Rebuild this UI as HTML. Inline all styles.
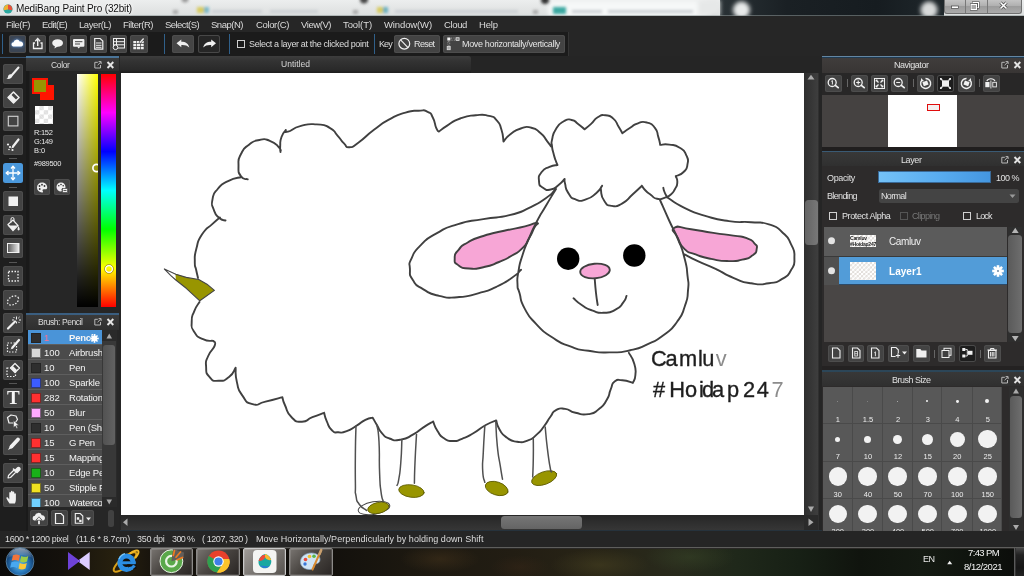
<!DOCTYPE html><html><head><meta charset="utf-8"><title>MediBang Paint Pro (32bit)</title><style>
*{box-sizing:border-box;margin:0;padding:0}
html,body{width:1024px;height:576px;overflow:hidden;background:#222}
body{position:relative;font-family:"Liberation Sans",sans-serif;font-size:9px;color:#d8d8d8}
.a{position:absolute}
.t{position:absolute;white-space:nowrap;line-height:1.15;will-change:transform}
.btn{position:absolute;background:#434343;border-radius:2.5px;box-shadow:inset 0 0 0 1px #4d4d4d}
.hdr{position:absolute;background:linear-gradient(#3b3b3b,#2f2f2f)}
svg{position:absolute;overflow:visible}
</style></head><body>
<div class="a" style="left:0px;top:0px;width:1024px;height:16px;background:linear-gradient(#eceeee,#e4e6e6 50%,#dcdfdf)"></div>
<div class="a" style="left:720px;top:0px;width:224px;height:16px;background:linear-gradient(90deg,#2a3236,#1a2024 30%,#161c20 70%,#20282c)"></div>
<svg style="left:0;top:0" width="1024" height="16" viewBox="0 0 1024 16"><defs><filter id="bl" x="-50%" y="-50%" width="200%" height="200%"><feGaussianBlur stdDeviation="1.500"/></filter><filter id="bl2" x="-50%" y="-50%" width="200%" height="200%"><feGaussianBlur stdDeviation="2.200"/></filter></defs><g filter="url(#bl2)"><rect x="548" y="1" width="160" height="16" rx="5" fill="#f6f8f8"/></g><g filter="url(#bl)"><rect x="197" y="7" width="8" height="6" fill="#d8cc60"/><rect x="204" y="7" width="5" height="6" fill="#7ab8c8"/><rect x="377" y="7" width="7" height="6" fill="#d8cc60"/><rect x="383" y="7" width="5" height="6" fill="#6ab0c0"/><rect x="553" y="7" width="13" height="7" fill="#3aa8a0"/><rect x="212" y="10" width="50" height="3" fill="#ccd0d4"/><rect x="270" y="10" width="48" height="3" fill="#ccd0d4"/><rect x="395" y="10" width="60" height="3" fill="#ccd0d4"/><rect x="448" y="10" width="70" height="3" fill="#ccd0d4"/><rect x="572" y="10" width="30" height="3" fill="#ccd0d4"/><rect x="608" y="10" width="85" height="3" fill="#ccd0d4"/><circle cx="185" cy="-1" r="3.500" fill="#999"/><circle cx="364" cy="-.5" r="4" fill="#444"/><circle cx="545" cy="0" r="4" fill="#333"/><rect x="173" y="10" width="5" height="4" fill="#a8a8a8"/><rect x="353" y="10" width="5" height="4" fill="#a8a8a8"/><rect x="533" y="10" width="5" height="4" fill="#a8a8a8"/><rect x="712" y="10" width="5" height="4" fill="#a8a8a8"/></g><g filter="url(#bl2)"><circle cx="741.500" cy="10" r="8.500" fill="#e8eaea"/><circle cx="929" cy="10" r="8.500" fill="#d8dada"/><rect x="698" y="0" width="22" height="16" fill="#e6e8e8"/></g></svg>
<div class="a" style="left:944px;top:0px;width:77.5px;height:13.5px;background:linear-gradient(#c4c4c4,#b0b0b0 45%,#9c9c9c 50%,#aaa);border:1px solid #707070;border-top:none;border-radius:0 0 3px 3px"></div>
<div class="a" style="left:965px;top:0px;width:1px;height:13px;background:#787878"></div>
<div class="a" style="left:987px;top:0px;width:1px;height:13px;background:#787878"></div>
<svg style="left:944px;top:0" width="78" height="14"><rect x="7.500" y="6" width="7" height="2.600" fill="#fff" stroke="#444" stroke-width=".7"/><rect x="29" y="2.500" width="5.500" height="5" fill="none" stroke="#444" stroke-width="2"/><rect x="29" y="2.500" width="5.500" height="5" fill="none" stroke="#fff" stroke-width="1"/><rect x="27" y="4.500" width="5.500" height="5" fill="#aaa" stroke="#444" stroke-width="2"/><rect x="27" y="4.500" width="5.500" height="5" fill="#aaa" stroke="#fff" stroke-width="1"/><path d="M56.500 2.500 62.500 8.500M62.500 2.500 56.500 8.500" stroke="#444" stroke-width="3"/><path d="M56.500 2.500 62.500 8.500M62.500 2.500 56.500 8.500" stroke="#fff" stroke-width="1.600"/></svg>
<div class="a" style="left:0px;top:14.5px;width:1024px;height:1px;background:rgba(140,150,150,.55)"></div>
<div class="t" style="left:16.00px;top:2.55px;font-size:10px;color:#111;letter-spacing:-0.157px;text-shadow:0 0 3px #fff,0 0 5px #fff;">MediBang Paint Pro (32bit)</div>
<svg style="left:2.500px;top:3.500px" width="10" height="10" viewBox="0 0 11 11"><circle cx="5.5" cy="5.5" r="5" fill="#2aa8a0"/><path d="M5.5 .5 A5 5 0 0 1 10 7 L5.5 6Z" fill="#e8503a"/><path d="M5.5 .5A5 5 0 0 0 1 7L5.5 6Z" fill="#f0b030"/></svg>
<div class="a" style="left:0px;top:16px;width:1024px;height:40px;background:#262626"></div>
<div class="t" style="left:6.00px;top:19.54px;font-size:9.5px;color:#dcdcdc;letter-spacing:-0.491px;">File(F)</div>
<div class="t" style="left:42.00px;top:19.54px;font-size:9.5px;color:#dcdcdc;letter-spacing:-0.576px;">Edit(E)</div>
<div class="t" style="left:79.00px;top:19.54px;font-size:9.5px;color:#dcdcdc;letter-spacing:-0.422px;">Layer(L)</div>
<div class="t" style="left:123.00px;top:19.54px;font-size:9.5px;color:#dcdcdc;letter-spacing:-0.478px;">Filter(R)</div>
<div class="t" style="left:165.00px;top:19.54px;font-size:9.5px;color:#dcdcdc;letter-spacing:-0.563px;">Select(S)</div>
<div class="t" style="left:211.00px;top:19.54px;font-size:9.5px;color:#dcdcdc;letter-spacing:-0.482px;">Snap(N)</div>
<div class="t" style="left:256.00px;top:19.54px;font-size:9.5px;color:#dcdcdc;letter-spacing:-0.362px;">Color(C)</div>
<div class="t" style="left:301.00px;top:19.54px;font-size:9.5px;color:#dcdcdc;letter-spacing:-0.441px;">View(V)</div>
<div class="t" style="left:343.00px;top:19.54px;font-size:9.5px;color:#dcdcdc;letter-spacing:-0.080px;">Tool(T)</div>
<div class="t" style="left:384.00px;top:19.54px;font-size:9.5px;color:#dcdcdc;letter-spacing:-0.120px;">Window(W)</div>
<div class="t" style="left:444.00px;top:19.54px;font-size:9.5px;color:#dcdcdc;letter-spacing:-0.364px;">Cloud</div>
<div class="t" style="left:479.00px;top:19.54px;font-size:9.5px;color:#dcdcdc;letter-spacing:-0.135px;">Help</div>
<div class="a" style="left:0px;top:32px;width:569px;height:24px;background:#1b1b1b;border-right:1px solid #343434"></div>
<div class="a" style="left:2px;top:34px;width:1px;height:20px;background:#30608a"></div>
<div class="a" style="left:164px;top:34px;width:1px;height:20px;background:#30608a"></div>
<div class="a" style="left:229px;top:34px;width:1px;height:20px;background:#30608a"></div>
<div class="a" style="left:374px;top:34px;width:1px;height:20px;background:#30608a"></div>
<div class="btn" style="left:9px;top:35px;width:17.25px;height:17.5px;background:#3b4554;"><svg width="17.25" height="17.5" viewBox="0 0 17.25 17.5" style="left:0;top:0"><path d="M4 11.5a2.2 2.2 0 0 1 .6-4.3 3.2 3.2 0 0 1 6.1-.6 2.5 2.5 0 0 1 1.6 4.9z" fill="#fff" style="filter:drop-shadow(0 0 1.5px #6af)"/></svg></div>
<div class="btn" style="left:29px;top:35px;width:17.25px;height:17.5px;"><svg width="17.25" height="17.5" viewBox="0 0 17.25 17.5" style="left:0;top:0"><path d="M6 8H4.5v5.5h8.5V8H11.500" fill="none" stroke="#f0f0f0" stroke-width="1.3"/><path d="M8.7 11V4.500" stroke="#f0f0f0" stroke-width="1.4"/><path d="M6.300 6.200 8.700 3.500 11.100 6.200" fill="none" stroke="#f0f0f0" stroke-width="1.3"/></svg></div>
<div class="btn" style="left:49.4px;top:35px;width:17.25px;height:17.5px;"><svg width="17.25" height="17.5" viewBox="0 0 17.25 17.5" style="left:0;top:0"><ellipse cx="8.600" cy="8" rx="5.400" ry="3.800" fill="#f0f0f0"/><path d="M6 10.500 5.500 13.500 9 11.300z" fill="#f0f0f0"/></svg></div>
<div class="btn" style="left:69.75px;top:35px;width:17.25px;height:17.5px;"><svg width="17.25" height="17.5" viewBox="0 0 17.25 17.5" style="left:0;top:0"><rect x="3" y="4" width="11.400" height="7.800" rx="1" fill="#f0f0f0"/><path d="M7 11.500 8.700 13.600 10.400 11.500z" fill="#f0f0f0"/><path d="M5 6.700h7.400M5 9h5" stroke="#444" stroke-width="1"/></svg></div>
<div class="btn" style="left:90px;top:35px;width:17.25px;height:17.5px;"><svg width="17.25" height="17.5" viewBox="0 0 17.25 17.5" style="left:0;top:0"><path d="M4.700 3.500h5.500l2.600 2.600v8H4.700z" fill="none" stroke="#f0f0f0" stroke-width="1.200"/><path d="M6 8h5.500M6 10.300h5.500M6 12.300h5.500" stroke="#f0f0f0" stroke-width="1"/></svg></div>
<div class="btn" style="left:110px;top:35px;width:17.25px;height:17.5px;"><svg width="17.25" height="17.5" viewBox="0 0 17.25 17.5" style="left:0;top:0"><rect x="3.500" y="3.500" width="11" height="9.500" fill="none" stroke="#f0f0f0" stroke-width="1"/><path d="M3.500 6.700h11M3.500 9.800h11M6.500 3.500v9.500" stroke="#f0f0f0" stroke-width="1"/><circle cx="5.500" cy="12.300" r="2.300" fill="#3f3f3f" stroke="#f0f0f0" stroke-width="1"/></svg></div>
<div class="btn" style="left:130.25px;top:35px;width:17.25px;height:17.5px;"><svg width="17.25" height="17.5" viewBox="0 0 17.25 17.5" style="left:0;top:0"><path d="M3.300 6h3v2.300h-3zM7 6h3v2.300H7zM10.700 6h3v2.300h-3zM3.300 9h3v2.300h-3zM7 9h3v2.300H7zM10.700 9h3v2.300h-3zM3.300 12h3v2.300h-3zM7 12h3v2.300H7zM10.700 12h3v2.300h-3z" fill="#f0f0f0"/><path d="M9.500 8 13.800 3.200" stroke="#3f3f3f" stroke-width="2.600"/><path d="M9.800 7.700 13.600 3.500" stroke="#f0f0f0" stroke-width="1.300"/></svg></div>
<div class="btn" style="left:171.5px;top:35px;width:22.25px;height:17.5px;background:#454545;"><svg width="22.25" height="17.5" viewBox="0 0 22.25 17.5" style="left:0;top:0"><path d="M4.500 8.200 9.300 4.500v2.300c4.500 0 7.200 2 8 5.700-2-2-4.500-2.700-8-2.500v2.200z" fill="#f0f0f0"/></svg></div>
<div class="btn" style="left:197.5px;top:35px;width:22.5px;height:17.5px;background:#262626;box-shadow:inset 0 0 0 1px #484848;"><svg width="22.5" height="17.5" viewBox="0 0 22.5 17.5" style="left:0;top:0"><path d="M18 8.200 13.200 4.500v2.300c-4.500 0-7.200 2-8 5.700 2-2 4.500-2.700 8-2.500v2.200z" fill="#f0f0f0"/></svg></div>
<div class="a" style="left:237px;top:40px;width:8px;height:8px;border:1px solid #d0d0d0"></div>
<div class="t" style="left:249.00px;top:38.83px;font-size:9px;color:#ddd;letter-spacing:-0.345px;">Select a layer at the clicked point</div>
<div class="t" style="left:379.00px;top:38.83px;font-size:9px;color:#ddd;letter-spacing:-0.903px;">Key</div>
<div class="btn" style="left:394.4px;top:35px;width:45.6px;height:17.5px"><svg width="46" height="17.500" style="left:0;top:0"><circle cx="10.300" cy="8.700" r="5.400" fill="none" stroke="#f0f0f0" stroke-width="1.200"/><path d="M6.600 4.800 14 12.600" stroke="#f0f0f0" stroke-width="1.200"/></svg></div>
<div class="t" style="left:413.70px;top:38.83px;font-size:9px;color:#e4e4e4;letter-spacing:-0.602px;">Reset</div>
<div class="btn" style="left:443.4px;top:35px;width:121.6px;height:17.5px"><svg width="20" height="17.500" style="left:0;top:0"><rect x="4.300" y="2.500" width="3" height="3" fill="#f4f4f4"/><rect x="8" y="3" width="4.300" height="2.200" fill="none" stroke="#aaa" stroke-width=".7" stroke-dasharray="1 .7"/><rect x="13.100" y="2.700" width="3" height="2.800" fill="#888" stroke="#ddd" stroke-width=".8"/><rect x="4.900" y="6.500" width="1.800" height="4" fill="none" stroke="#aaa" stroke-width=".7" stroke-dasharray="1 .7"/><rect x="4.200" y="11.500" width="3" height="3.200" fill="#aaa" stroke="#ddd" stroke-width=".8"/></svg></div>
<div class="t" style="left:462.00px;top:38.83px;font-size:9px;color:#e4e4e4;letter-spacing:-0.341px;">Move horizontally/vertically</div>
<div class="a" style="left:0px;top:56px;width:1024px;height:475px;background:#252525"></div>
<div class="a" style="left:119.5px;top:56px;width:351px;height:17px;background:linear-gradient(#3d3d3d,#333 30%,#2a2a2a 80%,#1c1c1c);border-radius:0 3px 0 0"></div>
<div class="t" style="left:281.00px;top:59.91px;font-size:8.5px;color:#d8d8d8;letter-spacing:0.023px;">Untitled</div>
<div class="a" style="left:121px;top:73px;width:683px;height:442px;background:#fff"></div>
<div class="a" style="left:804px;top:73px;width:14px;height:442px;background:linear-gradient(90deg,#2e2e2e,#3e3e3e)"></div>
<div class="a" style="left:818px;top:73px;width:1px;height:457px;background:#303030"></div>
<svg style="left:804px;top:73px" width="14" height="442"><path d="M3.500 6.500 7 1.800 10.500 6.500z" fill="#aaa"/><path d="M4 433.500 7 439 10 433.500z" fill="#aaa"/></svg>
<div class="a" style="left:805px;top:200px;width:13px;height:45px;background:linear-gradient(90deg,#646464,#787878);border-radius:3.500px"></div>
<div class="a" style="left:121px;top:515px;width:683px;height:14.5px;background:linear-gradient(#262626,#363636)"></div>
<div class="a" style="left:804px;top:515px;width:14px;height:14.5px;background:#2a2a2a"></div>
<svg style="left:121px;top:515px" width="700" height="15"><path d="M6.500 3.500 2 7.250 6.500 11z" fill="#aaa"/><path d="M687.500 3.500 692.500 7.250 687.500 11z" fill="#aaa"/></svg>
<div class="a" style="left:500.5px;top:516px;width:81.5px;height:13px;background:linear-gradient(#767676,#646464);border-radius:3.500px"></div>
<div class="a" style="left:119.5px;top:529.5px;width:702px;height:1.5px;background:#26323c"></div>
<svg style="left:121px;top:73px" width="683" height="442" viewBox="121 73 683 442"><g fill="none" stroke="#404040" stroke-width="1.900" stroke-linecap="round" stroke-linejoin="round"><path d="M536.7 223.0C533.7 222.4 535.8 223.8 525.0 226.4C514.2 229.0 518.1 227.6 504.2 230.8C490.3 234.0 495.5 232.1 483.3 236.0C471.1 239.9 475.9 237.9 467.7 242.5C459.5 247.1 462.9 244.6 458.6 249.8C454.3 255.0 454.7 252.9 454.7 258.1C454.7 263.3 453.8 261.9 458.6 265.4C463.4 268.9 460.8 267.9 469.0 268.5C477.2 269.1 473.3 269.4 483.3 267.2C493.3 265.0 489.4 265.9 499.0 262.0C508.6 258.1 504.2 260.1 512.0 255.5C519.8 250.9 516.8 253.8 522.4 248.2C528.0 242.6 525.0 245.3 528.9 238.6C532.8 231.9 531.5 233.4 534.1 228.2C536.7 223.0 539.7 223.6 536.7 223.0Z" fill="#f7a6d6"/><path d="M674.4 227.8C678.8 225.0 678.1 227.6 691.1 229.3C704.1 231.0 699.2 230.8 713.3 232.9C727.4 235.0 722.2 233.8 733.3 235.6C744.4 237.4 739.7 235.6 746.7 238.2C753.7 240.8 751.1 239.7 754.4 243.3C757.7 246.9 757.4 244.8 756.7 248.9C756.0 253.0 757.0 252.0 752.2 255.6C747.4 259.2 750.0 257.8 742.2 259.6C734.4 261.4 739.3 261.3 728.9 261.1C718.5 260.9 722.2 261.1 711.1 258.9C700.0 256.7 704.5 257.7 695.6 254.4C686.7 251.1 690.3 254.4 684.4 248.9C678.5 243.4 681.1 244.8 677.8 237.8C674.5 230.8 670.0 230.6 674.4 227.8Z" fill="#f7a6d6"/><path d="M175.500 273.800 186.250 277.400 198.750 279.500 207 284.200 214.400 290.400 199.800 300.800 186.250 288.300 175.800 279.800Z" fill="#989500" stroke="none"/><path d="M164.400 269 175.800 274.300 186.250 277.400 198.750 279.500 207 284.200 214.400 290.400 199.800 300.800 186.250 288.300 175.800 280 170.600 275.300Z" stroke-width="1.100" stroke="#444"/><ellipse cx="374" cy="508" rx="16" ry="6.300" transform="rotate(-10 374 508)" stroke="#444" stroke-width="1"/><ellipse cx="378.300" cy="507.900" rx="10.800" ry="5.400" transform="rotate(-12 378.300 507.900)" fill="#989500" stroke="#5a5800" stroke-width=".8"/><ellipse cx="411.500" cy="491" rx="12.800" ry="6.200" transform="rotate(8 411 490.600)" fill="#989500" stroke="#5a5800" stroke-width=".8"/><ellipse cx="496.700" cy="488.500" rx="11.800" ry="6.500" transform="rotate(18 496.700 488.500)" fill="#989500" stroke="#5a5800" stroke-width=".8"/><ellipse cx="544.200" cy="478.100" rx="13.200" ry="6.300" transform="rotate(-20 544.200 478.100)" fill="#989500" stroke="#5a5800" stroke-width=".8"/><path d="M198.0 278.0C197.4 275.3 197.3 275.4 196.2 270.0C195.1 264.6 194.7 268.8 194.8 261.7C194.9 254.6 194.0 257.7 196.4 248.6C198.8 239.5 196.7 242.5 202.1 234.3C207.5 226.1 206.5 229.5 212.5 223.9C218.5 218.3 217.5 219.6 220.0 217.5M225.5 220.5C223.3 219.6 222.9 221.4 219.0 217.8C215.1 214.2 216.0 215.9 213.8 209.8C211.6 203.7 211.2 206.3 212.5 199.4C213.8 192.5 212.5 195.1 217.7 189.0C222.9 182.9 220.2 185.1 228.1 181.1C236.0 177.1 237.0 178.4 241.5 177.0M247.7 179.3C245.5 178.3 244.1 180.9 241.0 176.3C237.9 171.7 238.5 173.0 238.5 165.5C238.5 158.0 237.6 160.7 241.1 153.8C244.6 146.9 242.9 149.3 249.0 144.7C255.1 140.1 252.5 141.3 259.4 140.0C266.3 138.7 263.3 138.4 269.8 140.8C276.3 143.2 275.3 143.6 278.9 147.3C282.5 151.0 280.0 150.4 280.5 152.0M280.5 152.0C280.4 150.0 279.9 151.0 280.2 146.0C280.5 141.0 279.6 142.3 281.5 137.0C283.4 131.7 284.4 132.3 285.8 130.0M285.8 130.0C286.5 130.6 282.9 133.1 288.0 131.7C293.1 130.3 291.4 128.3 301.0 125.9C310.6 123.5 307.1 123.8 316.7 124.4C326.3 125.0 322.8 124.1 329.7 127.8C336.6 131.5 332.7 130.4 337.5 135.6C342.3 140.8 340.0 139.5 344.0 143.4C348.0 147.3 344.6 147.5 349.5 147.2C354.4 146.9 350.3 148.4 358.6 142.5C366.9 136.6 363.9 137.3 374.3 129.5C384.7 121.7 379.5 124.7 389.9 119.1C400.3 113.5 396.0 115.4 405.5 112.6C415.0 109.8 411.1 111.0 418.5 110.7C425.9 110.4 422.9 109.4 427.7 111.8C432.5 114.2 430.0 112.3 432.9 117.8C435.8 123.3 434.3 123.6 436.3 128.2C438.3 132.8 438.0 130.5 438.9 131.6M438.9 131.6C441.7 129.6 440.1 130.0 447.2 125.6C454.3 121.2 450.7 122.0 460.2 118.5C469.7 115.0 466.2 116.1 475.8 115.2C485.4 114.3 481.9 114.2 488.9 115.9C495.9 117.6 492.5 115.9 496.7 120.4C500.9 124.9 499.1 122.5 501.4 129.5C503.7 136.5 502.8 137.5 503.5 141.5M503.5 141.5C505.8 139.1 504.6 138.6 510.4 134.3C516.2 130.0 513.8 130.7 520.8 128.5C527.8 126.3 524.8 126.3 531.3 127.8C537.8 129.3 535.2 128.7 540.4 133.0C545.6 137.3 543.4 136.3 546.9 140.8C550.4 145.3 549.6 144.6 551.0 146.5M557.5 165.0C556.8 163.3 556.9 164.0 555.5 160.0C554.1 156.0 554.6 157.7 553.4 153.0C552.2 148.3 552.4 150.5 552.0 146.0C551.6 141.5 550.8 145.1 552.1 139.5C553.4 133.9 552.1 135.2 556.0 129.1C559.9 123.0 558.6 124.3 563.8 121.3C569.0 118.3 566.8 119.1 571.6 120.0C576.4 120.9 573.8 120.8 578.1 123.9C582.4 127.0 582.4 127.5 584.6 129.3M584.6 129.3C586.8 127.5 586.7 127.9 591.1 123.9C595.5 119.9 592.9 120.2 597.7 117.3C602.5 114.4 600.3 114.9 605.5 115.3C610.7 115.7 609.0 114.9 613.3 118.6C617.6 122.3 615.5 121.6 618.5 126.5C621.5 131.4 621.1 131.0 622.4 133.2M622.4 133.2C625.0 131.4 625.0 131.1 630.2 127.8C635.4 124.5 632.4 125.0 638.0 123.3C643.6 121.6 641.5 121.1 647.1 122.6C652.7 124.1 651.2 123.0 654.9 127.8C658.6 132.6 656.5 131.2 658.3 136.9C660.1 142.6 659.6 142.2 660.2 144.9M660.2 144.9C663.2 144.8 662.8 143.6 669.3 144.6C675.8 145.6 674.1 144.3 679.7 147.8C685.3 151.3 683.6 149.6 686.2 155.1C688.8 160.6 688.4 158.6 687.5 164.2C686.6 169.8 687.5 168.0 683.6 172.0C679.7 176.0 678.4 174.8 675.8 176.2M675.8 176.2C676.3 178.3 677.6 178.1 677.3 182.4C677.0 186.7 677.3 184.9 675.0 189.0C672.7 193.1 674.0 191.8 670.5 194.7C667.0 197.6 668.9 196.4 664.4 197.8C659.9 199.2 661.5 199.7 657.0 198.8C652.5 197.9 654.8 197.8 651.0 195.0C647.2 192.2 648.5 193.6 645.5 190.5C642.5 187.4 643.1 187.4 641.9 185.8M663.3 187.8C663.7 189.2 663.3 188.9 664.5 192.0C665.7 195.1 666.2 195.3 667.0 197.0M641.9 185.8C638.9 188.6 639.3 188.4 632.8 194.2C626.3 200.0 629.3 199.4 622.4 203.3C615.5 207.2 618.1 206.8 612.0 205.9C605.9 205.0 607.9 205.9 604.2 200.7C600.5 195.5 601.7 195.3 601.0 190.3C600.3 185.3 601.7 187.3 602.1 185.8M602.1 185.8C600.2 188.2 601.8 188.4 596.4 192.9C591.0 197.4 592.9 197.2 585.9 199.4C578.9 201.6 581.4 201.6 575.5 199.4C569.6 197.2 571.7 198.1 568.2 192.9C564.7 187.7 566.3 188.4 565.1 183.8C563.9 179.2 564.8 180.6 564.6 179.0M564.6 179.0C562.6 181.0 563.2 181.5 558.6 185.0C554.0 188.5 556.0 188.6 550.8 189.5C545.6 190.4 546.9 190.5 543.0 187.7C539.1 184.9 539.4 186.3 539.0 181.1C538.6 175.9 538.2 176.8 541.7 172.0C545.2 167.2 544.3 169.1 549.5 166.8C554.7 164.5 554.7 165.6 557.3 165.0M554.7 190.3C551.7 192.9 554.0 192.5 545.8 198.2C537.6 203.9 542.3 201.6 530.2 207.3C518.1 213.0 525.0 211.3 509.4 215.2C493.8 219.1 500.7 216.1 483.3 219.1C465.9 222.1 472.9 219.5 457.3 224.3C441.7 229.1 448.7 226.5 436.5 233.4C424.3 240.3 429.1 236.9 420.8 245.1C412.5 253.3 415.3 250.3 411.7 258.1C408.1 265.9 409.5 261.1 409.9 268.5C410.3 275.9 408.5 273.3 413.0 280.3C417.5 287.3 414.7 284.2 423.4 289.4C432.1 294.6 427.8 293.3 439.1 295.9C450.4 298.5 444.3 298.1 457.3 297.2C470.3 296.3 465.1 296.8 478.1 293.3C491.1 289.8 485.1 292.0 496.4 286.8C507.7 281.6 503.8 283.4 512.0 277.7C520.2 272.0 518.1 272.4 521.1 269.8M556.0 189.0C552.6 194.7 552.2 195.1 545.8 206.0C539.4 216.9 542.3 210.8 536.7 221.7C531.1 232.6 533.7 227.3 528.9 238.6C524.1 249.9 525.9 244.7 522.4 255.5C518.9 266.3 520.1 261.5 518.5 271.1C516.9 280.7 517.2 276.9 517.5 284.2C517.8 291.5 517.1 284.9 519.5 293.0C521.9 301.1 519.0 298.2 524.7 308.6C530.4 319.0 527.4 314.7 536.5 324.3C545.6 333.9 540.8 329.9 552.1 337.3C563.4 344.7 558.2 341.9 570.3 346.4C582.4 350.9 575.5 348.8 588.5 350.8C601.5 352.8 595.5 352.6 609.4 352.4C623.3 352.2 617.2 353.2 630.2 350.3C643.2 347.4 637.1 349.0 648.4 343.8C659.7 338.6 654.5 342.1 664.1 334.7C673.7 327.3 670.2 331.3 677.1 321.7C684.0 312.1 681.3 316.4 684.9 306.0C688.5 295.6 687.1 300.5 688.0 290.4C688.9 280.3 688.7 286.5 687.5 275.6C686.3 264.7 687.6 270.0 684.4 257.8C681.2 245.6 683.0 251.5 677.8 238.9C672.6 226.3 674.8 233.0 668.9 220.0C663.0 207.0 663.0 206.7 660.0 200.0M667.8 197.8C673.3 201.1 672.2 201.9 684.4 207.8C696.6 213.7 689.6 211.2 704.4 215.6C719.2 220.0 713.3 218.9 728.9 221.1C744.5 223.3 737.8 221.1 751.1 222.2C764.4 223.3 758.5 221.1 768.9 224.4C779.3 227.7 774.8 225.5 782.2 232.2C789.6 238.9 787.0 235.9 791.1 244.4C795.2 252.9 794.4 249.3 794.4 257.8C794.4 266.3 795.2 263.0 791.1 270.0C787.0 277.0 789.6 274.5 782.2 278.9C774.8 283.3 779.3 281.8 768.9 283.3C758.5 284.8 763.0 285.1 751.1 283.3C739.2 281.5 745.1 282.6 733.3 277.8C721.5 273.0 727.4 274.5 715.6 268.9C703.8 263.3 708.2 265.9 697.8 261.1C687.4 256.3 688.9 256.6 684.4 254.4M594.7 278.4C595.1 283.3 595.0 284.1 596.0 293.0C597.0 301.9 597.1 301.0 597.7 305.0M573.5 298.3C576.2 300.5 575.5 301.0 581.7 305.0C587.9 309.0 584.6 307.8 592.0 310.4C599.4 313.0 596.0 313.0 603.8 312.8C611.6 312.6 609.0 313.2 615.5 309.7C622.0 306.2 619.6 307.0 623.3 302.4C627.0 297.8 625.4 298.1 626.5 295.9M628.9 352.9C630.6 356.4 631.9 355.9 634.1 363.3C636.3 370.7 635.8 368.5 635.4 375.0C635.0 381.5 633.7 380.3 632.8 382.9M632.8 382.9C629.3 382.0 628.5 380.7 622.4 380.3C616.3 379.9 618.5 378.6 614.6 381.6C610.7 384.6 613.3 383.3 610.7 389.4C608.1 395.5 610.7 393.3 606.8 399.8C602.9 406.3 605.1 404.1 599.0 408.9C592.9 413.7 596.3 412.8 588.5 414.1C580.7 415.4 583.3 414.5 575.5 412.8C567.7 411.1 571.6 409.8 565.1 408.9C558.6 408.0 560.9 407.6 556.0 410.2C551.1 412.8 554.3 411.4 550.4 416.7C546.5 422.0 548.7 420.1 544.2 426.0C539.7 431.9 542.5 429.5 536.9 434.4C531.3 439.3 534.1 438.2 527.5 440.6C520.9 443.0 524.0 442.7 517.1 441.7C510.2 440.7 512.6 441.7 506.7 437.5C500.8 433.3 502.9 434.9 499.4 429.2C495.9 423.5 497.3 423.3 496.2 420.4M496.2 420.4C492.8 421.9 493.4 420.7 485.8 425.0C478.2 429.3 481.2 428.7 473.3 433.3C465.4 437.9 468.9 436.2 462.0 438.8C455.1 441.4 458.5 441.2 452.5 441.0C446.5 440.8 449.0 441.6 444.0 438.3C439.0 435.0 441.1 436.6 437.5 431.0C433.9 425.4 434.6 424.7 433.1 421.5M433.1 421.5C430.0 423.4 430.4 422.8 423.8 427.1C417.1 431.4 420.9 430.2 413.3 434.4C405.7 438.6 408.8 438.2 400.8 439.6C392.8 441.0 395.6 440.6 389.4 438.5C383.2 436.4 386.3 437.8 382.1 433.3C377.9 428.8 380.0 430.2 376.9 425.0C373.8 419.8 374.1 420.1 372.7 417.7M372.7 417.7C370.3 418.4 371.0 417.0 365.4 419.8C359.8 422.6 362.2 422.2 356.0 426.0C349.8 429.8 352.6 429.1 346.7 431.2C340.8 433.4 343.2 432.6 338.3 432.3C333.4 432.0 335.8 434.0 331.9 430.3C328.0 426.6 329.3 426.9 326.7 421.1C324.1 415.3 325.0 415.6 324.1 412.8M324.1 412.8C320.2 414.3 319.8 414.2 312.4 417.2C305.0 420.2 308.9 421.7 302.0 421.7C295.1 421.7 297.2 422.6 291.6 417.2C286.0 411.8 288.2 412.2 285.1 405.5C282.0 398.8 283.3 400.0 282.4 397.2M282.4 397.2C276.8 398.7 275.5 399.3 265.5 401.6C255.5 403.9 260.3 406.4 252.5 404.2C244.7 402.0 247.3 402.5 242.1 395.1C236.9 387.7 239.1 391.2 236.9 382.1C234.7 373.0 236.0 372.6 235.6 367.8M235.6 367.8C233.4 370.8 234.7 372.6 229.0 376.9C223.3 381.2 225.1 380.8 218.6 380.8C212.1 380.8 213.7 381.7 209.5 376.9C205.3 372.1 206.5 373.5 206.1 366.5C205.7 359.5 205.3 363.0 208.2 356.0C211.1 349.0 213.0 350.6 214.7 345.6C216.4 340.6 213.8 342.5 213.4 340.9M213.4 340.9C209.9 340.3 209.4 342.1 203.0 339.1C196.6 336.1 198.1 337.8 194.3 332.0C190.5 326.2 191.7 328.6 191.7 321.6C191.7 314.6 191.7 317.6 194.3 311.1C196.9 304.6 197.8 305.0 199.5 302.0"/><path d="M356.0 426.0C355.8 434.7 355.6 433.0 355.4 452.1C355.2 471.2 355.2 468.7 355.4 483.3C355.6 497.9 354.7 488.8 356.0 495.8C357.3 502.8 355.7 499.3 359.2 504.2C362.7 509.1 364.1 508.3 366.5 510.4M376.9 425.0C377.6 430.6 378.1 425.7 379.0 441.7C379.9 457.7 378.9 456.2 379.6 472.9C380.3 489.6 379.8 482.3 381.0 491.7C382.2 501.1 382.4 497.9 383.1 501.0M401.9 439.6C401.5 447.2 401.9 449.3 400.8 462.5C399.8 475.7 400.0 471.6 398.8 479.2C397.5 486.8 397.6 483.3 397.0 485.4M416.5 434.4C416.0 443.8 415.7 446.2 415.0 462.5C414.3 478.8 414.6 476.4 414.4 483.3M484.8 426.0C484.3 434.7 484.0 437.2 483.3 452.1C482.6 467.0 482.2 460.7 482.7 470.8C483.2 480.9 484.1 478.5 484.8 482.3M495.8 421.9C496.3 429.9 495.8 430.9 497.3 445.8C498.8 460.7 498.7 455.6 500.4 466.7C502.1 477.8 501.8 475.0 502.5 479.2M533.3 438.5C533.3 445.1 533.5 445.5 533.3 458.3C533.1 471.1 532.9 470.8 532.7 477.0M545.2 427.0C545.9 434.0 545.7 434.7 547.3 447.9C548.9 461.1 548.6 458.7 550.0 466.7C551.4 474.7 551.0 470.2 551.5 471.9" stroke="#505050" stroke-width="1.500"/><ellipse cx="595" cy="271" rx="14.800" ry="7.300" transform="rotate(-5 595 271)" fill="#f7a6d6"/></g><circle cx="568.200" cy="258.700" r="11.200" fill="#000"/><circle cx="634.300" cy="255.500" r="11.200" fill="#000"/></svg>
<div class="t" style="left:0;top:345.94px;font-size:21.8px;line-height:1.150"><span style="position:absolute;left:650.88px;top:0;color:#1e1e1e;-webkit-text-stroke:.35px #1e1e1e;">C</span><span style="position:absolute;left:665.59px;top:0;color:#1e1e1e;-webkit-text-stroke:.35px #1e1e1e;">a</span><span style="position:absolute;left:678.94px;top:0;color:#1e1e1e;-webkit-text-stroke:.35px #1e1e1e;">m</span><span style="position:absolute;left:698.11px;top:0;color:#1e1e1e;-webkit-text-stroke:.35px #1e1e1e;">l</span><span style="position:absolute;left:702.29px;top:0;color:#1e1e1e;-webkit-text-stroke:.35px #1e1e1e;">u</span><span style="position:absolute;left:715.86px;top:0;color:#8c8c8c;">v</span></div>
<div class="t" style="left:0;top:377.14px;font-size:21.8px;line-height:1.150"><span style="position:absolute;left:653.09px;top:0;color:#1e1e1e;-webkit-text-stroke:.35px #1e1e1e;">#</span><span style="position:absolute;left:669.25px;top:0;color:#1e1e1e;-webkit-text-stroke:.35px #1e1e1e;">H</span><span style="position:absolute;left:685.06px;top:0;color:#1e1e1e;-webkit-text-stroke:.35px #1e1e1e;">o</span><span style="position:absolute;left:698.91px;top:0;color:#1e1e1e;-webkit-text-stroke:.35px #1e1e1e;">i</span><span style="position:absolute;left:701.94px;top:0;color:#1e1e1e;-webkit-text-stroke:.35px #1e1e1e;">d</span><span style="position:absolute;left:712.04px;top:0;color:#1e1e1e;-webkit-text-stroke:.35px #1e1e1e;">a</span><span style="position:absolute;left:726.89px;top:0;color:#1e1e1e;-webkit-text-stroke:.35px #1e1e1e;">p</span><span style="position:absolute;left:742.89px;top:0;color:#1e1e1e;-webkit-text-stroke:.35px #1e1e1e;">2</span><span style="position:absolute;left:756.64px;top:0;color:#1e1e1e;-webkit-text-stroke:.35px #1e1e1e;">4</span><span style="position:absolute;left:771.44px;top:0;color:#8c8c8c;">7</span></div>
<div class="a" style="left:0px;top:56px;width:26px;height:475px;background:#1e1e1e"></div>
<div class="a" style="left:0px;top:57px;width:26px;height:1px;background:#34506c"></div>
<div class="btn" style="left:3px;top:64px;width:20px;height:20px;"><svg width="20" height="20" viewBox="0 0 20 20" style="left:0;top:0"><path d="M15.500 3.500 9 11" stroke="#f0f0f0" stroke-width="2" stroke-linecap="round"/><path d="M8.500 10.500c-2-.8-3.300.7-3.500 2.200-.1 1-.8 1.600-1.600 1.900 2.700 1 5.600-.300 6.200-2.900z" fill="#f0f0f0"/></svg></div>
<div class="btn" style="left:3px;top:87.5px;width:20px;height:20px;"><svg width="20" height="20" viewBox="0 0 20 20" style="left:0;top:0"><path d="M10.500 4 16 9.500 10.500 15 5 9.500z" fill="none" stroke="#f0f0f0" stroke-width="1.500" stroke-linejoin="round"/><path d="M5 9.500 8 6.500 13.500 12 10.500 15z" fill="#f0f0f0"/></svg></div>
<div class="btn" style="left:3px;top:111px;width:20px;height:20px;"><svg width="20" height="20" viewBox="0 0 20 20" style="left:0;top:0"><rect x="5.300" y="5.300" width="9.600" height="9.600" fill="none" stroke="#d4d4d4" stroke-width="1.100"/></svg></div>
<div class="btn" style="left:3px;top:134.5px;width:20px;height:20px;"><svg width="20" height="20" viewBox="0 0 20 20" style="left:0;top:0"><path d="M15.500 4.500 10 11.500" stroke="#f0f0f0" stroke-width="2.200" stroke-linecap="round"/><path d="M9.600 11 8 13.500 10.800 12.500z" fill="#f0f0f0"/><circle cx="5" cy="9.500" r="1.100" fill="#f0f0f0"/><circle cx="7" cy="12" r="1.100" fill="#f0f0f0"/><circle cx="9.500" cy="15" r="1.100" fill="#f0f0f0"/><circle cx="6" cy="14.500" r=".8" fill="#f0f0f0"/></svg></div>
<div class="a" style="left:9px;top:158px;width:8px;height:1px;background:#555"></div>
<div class="btn" style="left:3px;top:163px;width:20px;height:20px;background:#4a98dc;box-shadow:none;"><svg width="20" height="20" viewBox="0 0 20 20" style="left:0;top:0"><path d="M10 3.500v13M3.500 10h13" stroke="#fff" stroke-width="1.300"/><path d="M8 5.500 10 3.200 12 5.500M8 14.500 10 16.800 12 14.500M5.500 8 3.200 10 5.500 12M14.500 8 16.800 10 14.500 12" fill="none" stroke="#fff" stroke-width="1.300"/></svg></div>
<div class="a" style="left:9px;top:186.5px;width:8px;height:1px;background:#555"></div>
<div class="btn" style="left:3px;top:191.25px;width:20px;height:20px;"><svg width="20" height="20" viewBox="0 0 20 20" style="left:0;top:0"><rect x="5.500" y="5.500" width="9.500" height="9.500" fill="#f0f0f0"/></svg></div>
<div class="btn" style="left:3px;top:214.5px;width:20px;height:20px;"><svg width="20" height="20" viewBox="0 0 20 20" style="left:0;top:0"><path d="M5 9.500 10 5l5 5.500-5 5z" fill="none" stroke="#f0f0f0" stroke-width="1.200"/><path d="M4.500 10.500h10l-4.500 5z" fill="#f0f0f0"/><path d="M8 7.500V4a1.500 1.500 0 0 1 3 0v2" fill="none" stroke="#f0f0f0" stroke-width="1"/><path d="M15.500 11c.8 1.500 1.200 2.500 1.200 3.300a1.100 1.100 0 0 1-2.200 0c0-.8.300-1.800 1-3.300z" fill="#f0f0f0"/></svg></div>
<div class="btn" style="left:3px;top:238px;width:20px;height:20px;"><svg width="20" height="20" viewBox="0 0 20 20" style="left:0;top:0"><defs><linearGradient id="gg" x1="0" x2="1"><stop offset="0" stop-color="#555"/><stop offset="1" stop-color="#eee"/></linearGradient></defs><rect x="4.500" y="5.500" width="11.500" height="9" fill="url(#gg)" stroke="#f0f0f0" stroke-width="1"/></svg></div>
<div class="a" style="left:9px;top:262px;width:8px;height:1px;background:#555"></div>
<div class="btn" style="left:3px;top:266.25px;width:20px;height:20px;"><svg width="20" height="20" viewBox="0 0 20 20" style="left:0;top:0"><rect x="5.500" y="5.500" width="9.500" height="9.500" fill="none" stroke="#f0f0f0" stroke-width="1.300" stroke-dasharray="1.500 1.500"/></svg></div>
<div class="btn" style="left:3px;top:289.5px;width:20px;height:20px;"><svg width="20" height="20" viewBox="0 0 20 20" style="left:0;top:0"><ellipse cx="10" cy="10.500" rx="6" ry="4" transform="rotate(-30 10 10.500)" fill="none" stroke="#f0f0f0" stroke-width="1.200" stroke-dasharray="1.500 1.500"/></svg></div>
<div class="btn" style="left:3px;top:313px;width:20px;height:20px;"><svg width="20" height="20" viewBox="0 0 20 20" style="left:0;top:0"><path d="M5 15.500 12 8.500" stroke="#f0f0f0" stroke-width="2.200" stroke-linecap="round"/><path d="M13.500 3.500v3M13.500 8.500v2M11 7h-2M16 7h2M11.700 5.200 10.500 4M15.300 5.200 16.500 4M15.300 8.800 16.500 10" stroke="#f0f0f0" stroke-width="1"/></svg></div>
<div class="btn" style="left:3px;top:336.25px;width:20px;height:20px;"><svg width="20" height="20" viewBox="0 0 20 20" style="left:0;top:0"><rect x="4.500" y="7" width="9" height="9" fill="none" stroke="#f0f0f0" stroke-width="1.200" stroke-dasharray="1.500 1.500"/><path d="M16 4 9.500 11.500" stroke="#f0f0f0" stroke-width="2.200" stroke-linecap="round"/><path d="M9 11 7.500 13.500 10.300 12.300z" fill="#f0f0f0"/></svg></div>
<div class="btn" style="left:3px;top:359.5px;width:20px;height:20px;"><svg width="20" height="20" viewBox="0 0 20 20" style="left:0;top:0"><rect x="4" y="8" width="8.500" height="8.500" fill="none" stroke="#f0f0f0" stroke-width="1.200" stroke-dasharray="1.500 1.500"/><path d="M12 3.500 16.500 8 12 12.500 7.500 8z" fill="#3f3f3f" stroke="#f0f0f0" stroke-width="1.300" stroke-linejoin="round"/><path d="M7.500 8 9.700 5.800 14.200 10.300 12 12.500z" fill="#f0f0f0"/></svg></div>
<div class="a" style="left:9px;top:383px;width:8px;height:1px;background:#555"></div>
<div class="btn" style="left:3px;top:387.500px;width:20px;height:20px"></div>
<div class="t" style="left:7.20px;top:386.88px;font-size:19px;color:#f4f4f4;font-weight:bold;font-family:'Liberation Serif',serif;">T</div>
<div class="btn" style="left:3px;top:411.25px;width:20px;height:20px;"><svg width="20" height="20" viewBox="0 0 20 20" style="left:0;top:0"><path d="M4.500 6.500 8 4l5 1 1.500 3.500L12 12H6z" fill="none" stroke="#f0f0f0" stroke-width="1.200" stroke-linejoin="round"/><path d="M10.500 9.500v7l1.800-1.500 1.300 2.500 1.200-.6-1.300-2.400 2.300-.300z" fill="#f0f0f0" stroke="#3f3f3f" stroke-width=".5"/></svg></div>
<div class="btn" style="left:3px;top:435px;width:20px;height:20px;"><svg width="20" height="20" viewBox="0 0 20 20" style="left:0;top:0"><path d="M15 4.500 8.500 11.500" stroke="#f0f0f0" stroke-width="3.800" stroke-linecap="round"/><path d="M7.500 10 5 15l5-2.500z" fill="#f0f0f0"/></svg></div>
<div class="a" style="left:9px;top:458.5px;width:8px;height:1px;background:#555"></div>
<div class="btn" style="left:3px;top:463px;width:20px;height:20px;"><svg width="20" height="20" viewBox="0 0 20 20" style="left:0;top:0"><path d="M5 15 5.500 12.500 11 7l2 2-5.500 5.500z" fill="none" stroke="#f0f0f0" stroke-width="1.200" stroke-linejoin="round"/><path d="M10.500 6 14 9.500M12 7.500 14.500 5a1.300 1.300 0 0 1 2 2L14 9.500" stroke="#f0f0f0" stroke-width="1.600" fill="#f0f0f0" stroke-linecap="round"/></svg></div>
<div class="btn" style="left:3px;top:486.5px;width:20px;height:20px;"><svg width="20" height="20" viewBox="0 0 20 20" style="left:0;top:0"><path d="M6.500 16.500c-1-1.500-2.300-3.500-3-5-.4-1 .8-1.600 1.500-.7l1.300 1.700V6c0-1.200 1.600-1.200 1.600 0V4.700c0-1.200 1.700-1.200 1.700 0V5.500c0-1.200 1.700-1.200 1.700 0V7c0-1.100 1.600-1.100 1.600 0v5.500c0 1.500-.5 3-1 4z" fill="#f0f0f0"/></svg></div>
<div class="a" style="left:26px;top:56px;width:93px;height:257px;background:linear-gradient(90deg,#1a1a1a 0,#1a1a1a 3px,#262626 4px)"></div>
<div class="a" style="left:26px;top:56px;width:93px;height:1.5px;background:#4a7498"></div>
<div class="hdr" style="left:26px;top:58px;width:92.500px;height:13px"></div>
<div class="t" style="left:50.75px;top:61.11px;font-size:8.5px;color:#dcdcdc;letter-spacing:-0.362px;">Color</div>
<svg style="left:94px;top:60.8px" width="22" height="8" viewBox="0 0 22 8"><path d="M3.800 1.300H.8v5.700h5.700V4" fill="none" stroke="#b8b8b8" stroke-width="1"/><path d="M3.600 4.200 6.800 1M4.600 .6h2.500V3" fill="none" stroke="#b8b8b8" stroke-width="1"/><path d="M13.500 1 19.300 7M19.300 1 13.500 7" stroke="#e4e4e4" stroke-width="1.900"/></svg>
<div class="a" style="left:40px;top:85px;width:14px;height:15px;background:#ff1400"></div>
<div class="a" style="left:32px;top:78px;width:15.5px;height:15.5px;background:#ff1400"></div>
<div class="a" style="left:34.3px;top:80px;width:12px;height:11.5px;background:#989500"></div>
<div class="a" style="left:35px;top:106px;width:17.5px;height:17.5px;background:#fff;background-image:linear-gradient(45deg,#e0e0e0 25%,transparent 25%,transparent 75%,#e0e0e0 75%),linear-gradient(45deg,#e0e0e0 25%,transparent 25%,transparent 75%,#e0e0e0 75%);background-size:8.750px 8.500px;background-position:0 0,4.375px 4.250px;"></div>
<div class="t" style="left:33.50px;top:129.49px;font-size:7.5px;color:#e8e8e8;letter-spacing:-0.303px;">R:152</div>
<div class="t" style="left:33.50px;top:138.29px;font-size:7.5px;color:#e8e8e8;letter-spacing:-0.387px;">G:149</div>
<div class="t" style="left:33.50px;top:146.89px;font-size:7.5px;color:#e8e8e8;letter-spacing:-0.086px;">B:0</div>
<div class="t" style="left:33.50px;top:159.99px;font-size:7.5px;color:#e8e8e8;letter-spacing:-0.315px;">#989500</div>
<div class="btn" style="left:34px;top:178.500px;width:16px;height:16.500px"><svg width="16" height="16.500" style="left:0;top:0"><path d="M8 3.500a5 5 0 1 0 0 10c1.200 0 1.200-1 .7-1.600-.6-.8.100-1.700 1-1.700H11.500c1.200 0 1.700-.8 1.700-1.800C13.200 5.500 10.800 3.500 8 3.500z" fill="#f0f0f0"/><circle cx="5.500" cy="7" r=".9" fill="#333"/><circle cx="8" cy="5.700" r=".9" fill="#333"/><circle cx="10.500" cy="7" r=".9" fill="#333"/><circle cx="5.700" cy="10" r=".9" fill="#333"/></svg></div>
<div class="btn" style="left:54px;top:178.500px;width:16px;height:16.500px"><svg width="16" height="16.500" style="left:0;top:0"><path d="M7 3.500a4.500 4.500 0 1 0 0 9c1 0 1-.9.600-1.400-.5-.7.100-1.500.9-1.500H10c1 0 1.500-.7 1.500-1.600C11.500 5.300 9.500 3.500 7 3.500z" fill="#f0f0f0"/><circle cx="4.800" cy="6.700" r=".8" fill="#333"/><circle cx="7" cy="5.500" r=".8" fill="#333"/><circle cx="9.200" cy="6.700" r=".8" fill="#333"/><rect x="8.500" y="9.500" width="5" height="4" fill="#f0f0f0" stroke="#3f3f3f" stroke-width=".6"/><path d="M9.500 11.500h3" stroke="#333" stroke-width=".8"/></svg></div>
<div class="a" style="left:77px;top:73.5px;width:21px;height:233px;background:linear-gradient(#0000,#000),linear-gradient(90deg,#fff,#ffff00);overflow:hidden"><svg style="left:13px;top:88.500px" width="12" height="12"><circle cx="6.500" cy="6" r="3.600" fill="none" stroke="#fff" stroke-width="1.700"/></svg></div>
<div class="a" style="left:101px;top:73.5px;width:15px;height:233px;background:linear-gradient(#ff0000 0,#ff00ff 16.600%,#0000ff 33.300%,#00ffff 50%,#00ff00 66.600%,#ffff00 83.300%,#ff0000 100%)"></div>
<svg style="left:102.500px;top:262.500px" width="12" height="12"><circle cx="6" cy="6" r="3.500" fill="none" stroke="#fff" stroke-width="1.400"/><circle cx="6" cy="6" r="4.500" fill="none" stroke="#7a6a20" stroke-width=".6"/></svg>
<div class="a" style="left:26px;top:313px;width:93px;height:218px;background:linear-gradient(90deg,#1a1a1a 0,#1a1a1a 1.500px,#262626 2px)"></div>
<div class="a" style="left:26px;top:313px;width:93px;height:1.5px;background:#3a5e80"></div>
<div class="hdr" style="left:26px;top:314.500px;width:92.500px;height:15px"></div>
<div class="t" style="left:37.50px;top:317.61px;font-size:8.5px;color:#dcdcdc;letter-spacing:-0.429px;">Brush: Pencil</div>
<svg style="left:94px;top:318.3px" width="22" height="8" viewBox="0 0 22 8"><path d="M3.800 1.300H.8v5.700h5.700V4" fill="none" stroke="#b8b8b8" stroke-width="1"/><path d="M3.600 4.200 6.800 1M4.600 .6h2.500V3" fill="none" stroke="#b8b8b8" stroke-width="1"/><path d="M13.500 1 19.300 7M19.300 1 13.500 7" stroke="#e4e4e4" stroke-width="1.900"/></svg>
<div class="a" style="left:28px;top:330px;width:73.500px;height:177px;overflow:hidden;background:#4b4b4b">
<div class="a" style="left:0;top:0px;width:74px;height:15px;background:#4a94d8;border-bottom:1px solid #5e5e5e"></div>
<div class="a" style="left:2.500px;top:2.5px;width:10px;height:10px;background:#2e2e2e;border:1px solid rgba(30,30,30,.55)"></div>
<div class="t" style="left:16px;top:3px;font-size:9.500px;color:#ff7090">1</div>
<div class="t" style="left:40.500px;top:3px;font-size:9.500px;letter-spacing:-.2px;color:#f4f4f4;font-weight:bold;">Pencil</div>
<div class="a" style="left:0;top:15px;width:74px;height:15px;background:#4b4b4b;border-bottom:1px solid #5e5e5e"></div>
<div class="a" style="left:2.500px;top:17.5px;width:10px;height:10px;background:#d8d8d8;border:1px solid rgba(30,30,30,.55)"></div>
<div class="t" style="left:16px;top:18px;font-size:9.500px;color:#f0f0f0">100</div>
<div class="t" style="left:40.500px;top:18px;font-size:9.500px;letter-spacing:-.2px;color:#f4f4f4;">Airbrush</div>
<div class="a" style="left:0;top:30px;width:74px;height:15px;background:#4b4b4b;border-bottom:1px solid #5e5e5e"></div>
<div class="a" style="left:2.500px;top:32.5px;width:10px;height:10px;background:#2e2e2e;border:1px solid rgba(30,30,30,.55)"></div>
<div class="t" style="left:16px;top:33px;font-size:9.500px;color:#f0f0f0">10</div>
<div class="t" style="left:40.500px;top:33px;font-size:9.500px;letter-spacing:-.2px;color:#f4f4f4;">Pen</div>
<div class="a" style="left:0;top:45px;width:74px;height:15px;background:#4b4b4b;border-bottom:1px solid #5e5e5e"></div>
<div class="a" style="left:2.500px;top:47.5px;width:10px;height:10px;background:#3c5cff;border:1px solid rgba(30,30,30,.55)"></div>
<div class="t" style="left:16px;top:48px;font-size:9.500px;color:#f0f0f0">100</div>
<div class="t" style="left:40.500px;top:48px;font-size:9.500px;letter-spacing:-.2px;color:#f4f4f4;">Sparkle</div>
<div class="a" style="left:0;top:60px;width:74px;height:15px;background:#4b4b4b;border-bottom:1px solid #5e5e5e"></div>
<div class="a" style="left:2.500px;top:62.5px;width:10px;height:10px;background:#ff3030;border:1px solid rgba(30,30,30,.55)"></div>
<div class="t" style="left:16px;top:63px;font-size:9.500px;color:#f0f0f0">282</div>
<div class="t" style="left:40.500px;top:63px;font-size:9.500px;letter-spacing:-.2px;color:#f4f4f4;">Rotation Symmetry</div>
<div class="a" style="left:0;top:75px;width:74px;height:15px;background:#4b4b4b;border-bottom:1px solid #5e5e5e"></div>
<div class="a" style="left:2.500px;top:77.5px;width:10px;height:10px;background:#ffaaff;border:1px solid rgba(30,30,30,.55)"></div>
<div class="t" style="left:16px;top:78px;font-size:9.500px;color:#f0f0f0">50</div>
<div class="t" style="left:40.500px;top:78px;font-size:9.500px;letter-spacing:-.2px;color:#f4f4f4;">Blur</div>
<div class="a" style="left:0;top:90px;width:74px;height:15px;background:#4b4b4b;border-bottom:1px solid #5e5e5e"></div>
<div class="a" style="left:2.500px;top:92.5px;width:10px;height:10px;background:#2e2e2e;border:1px solid rgba(30,30,30,.55)"></div>
<div class="t" style="left:16px;top:93px;font-size:9.500px;color:#f0f0f0">10</div>
<div class="t" style="left:40.500px;top:93px;font-size:9.500px;letter-spacing:-.2px;color:#f4f4f4;">Pen (Sharp)</div>
<div class="a" style="left:0;top:105px;width:74px;height:15px;background:#4b4b4b;border-bottom:1px solid #5e5e5e"></div>
<div class="a" style="left:2.500px;top:107.5px;width:10px;height:10px;background:#ff3030;border:1px solid rgba(30,30,30,.55)"></div>
<div class="t" style="left:16px;top:108px;font-size:9.500px;color:#f0f0f0">15</div>
<div class="t" style="left:40.500px;top:108px;font-size:9.500px;letter-spacing:-.2px;color:#f4f4f4;">G Pen</div>
<div class="a" style="left:0;top:120px;width:74px;height:15px;background:#4b4b4b;border-bottom:1px solid #5e5e5e"></div>
<div class="a" style="left:2.500px;top:122.5px;width:10px;height:10px;background:#ff3030;border:1px solid rgba(30,30,30,.55)"></div>
<div class="t" style="left:16px;top:123px;font-size:9.500px;color:#f0f0f0">15</div>
<div class="t" style="left:40.500px;top:123px;font-size:9.500px;letter-spacing:-.2px;color:#f4f4f4;">Mapping Pen</div>
<div class="a" style="left:0;top:135px;width:74px;height:15px;background:#4b4b4b;border-bottom:1px solid #5e5e5e"></div>
<div class="a" style="left:2.500px;top:137.5px;width:10px;height:10px;background:#18b018;border:1px solid rgba(30,30,30,.55)"></div>
<div class="t" style="left:16px;top:138px;font-size:9.500px;color:#f0f0f0">10</div>
<div class="t" style="left:40.500px;top:138px;font-size:9.500px;letter-spacing:-.2px;color:#f4f4f4;">Edge Pen</div>
<div class="a" style="left:0;top:150px;width:74px;height:15px;background:#4b4b4b;border-bottom:1px solid #5e5e5e"></div>
<div class="a" style="left:2.500px;top:152.5px;width:10px;height:10px;background:#f0e020;border:1px solid rgba(30,30,30,.55)"></div>
<div class="t" style="left:16px;top:153px;font-size:9.500px;color:#f0f0f0">50</div>
<div class="t" style="left:40.500px;top:153px;font-size:9.500px;letter-spacing:-.2px;color:#f4f4f4;">Stipple Pen</div>
<div class="a" style="left:0;top:165px;width:74px;height:15px;background:#4b4b4b;border-bottom:1px solid #5e5e5e"></div>
<div class="a" style="left:2.500px;top:167.5px;width:10px;height:10px;background:#70d0ff;border:1px solid rgba(30,30,30,.55)"></div>
<div class="t" style="left:16px;top:168px;font-size:9.500px;color:#f0f0f0">100</div>
<div class="t" style="left:40.500px;top:168px;font-size:9.500px;letter-spacing:-.2px;color:#f4f4f4;">Watercolor</div>
</div>
<svg style="left:90px;top:334px" width="9" height="9" viewBox="-5.500 -5.500 11 11"><g fill="#fff"><circle r="3.300"/><rect x="-1" y="-5.200" width="2" height="3" transform="rotate(0)"/><rect x="-1" y="-5.200" width="2" height="3" transform="rotate(45)"/><rect x="-1" y="-5.200" width="2" height="3" transform="rotate(90)"/><rect x="-1" y="-5.200" width="2" height="3" transform="rotate(135)"/><rect x="-1" y="-5.200" width="2" height="3" transform="rotate(180)"/><rect x="-1" y="-5.200" width="2" height="3" transform="rotate(225)"/><rect x="-1" y="-5.200" width="2" height="3" transform="rotate(270)"/><rect x="-1" y="-5.200" width="2" height="3" transform="rotate(315)"/></g></svg>
<div class="a" style="left:102px;top:330px;width:14.5px;height:177px;background:#2a2a2a"></div>
<div class="a" style="left:102px;top:341px;width:14px;height:156px;background:#383838"></div>
<svg style="left:102px;top:330px" width="14.500" height="177"><path d="M4.500 8.500 7.250 3.500 10 8.500z" fill="#aaa"/><path d="M4.500 169.500 7.250 174.500 10 169.500z" fill="#aaa"/></svg>
<div class="a" style="left:103px;top:345px;width:12px;height:100px;background:linear-gradient(90deg,#525252,#626262);border-radius:3px"></div>
<div class="btn" style="left:30px;top:509.500px;width:18px;height:16.500px"><svg width="18" height="16.500" style="left:0;top:0"><path d="M4.300 10.500a2.400 2.400 0 0 1 .6-4.700 3.600 3.600 0 0 1 6.900-.600 2.800 2.800 0 0 1 1.600 5.300z" fill="#f0f0f0"/><path d="M9 14.500V8.500" stroke="#3f3f3f" stroke-width="3.400"/><path d="M9 14.300V8" stroke="#f0f0f0" stroke-width="1.800"/><path d="M5.800 10.300 9 6.800 12.200 10.300z" fill="#f0f0f0" stroke="#3f3f3f" stroke-width=".7"/></svg></div>
<div class="btn" style="left:50.500px;top:509.500px;width:17px;height:16.500px"><svg width="17" height="16.500" style="left:0;top:0"><path d="M4.500 3.500h5.500l2.500 2.500v7.500H4.500z" fill="none" stroke="#f0f0f0" stroke-width="1.200"/></svg></div>
<div class="btn" style="left:70.500px;top:509.500px;width:23px;height:16.500px"><svg width="23" height="16.500" style="left:0;top:0"><path d="M4.300 3.500h5l2.500 2.500v7.300H4.300z" fill="none" stroke="#f0f0f0" stroke-width="1.100"/><path d="M5.800 7.300h2.400v2.400H5.800zM8.200 9.700h2.400v2.400H8.200z" fill="#f0f0f0"/><path d="M15 7.500h5L17.500 10.500z" fill="#f0f0f0"/></svg></div>
<div class="a" style="left:108px;top:509.5px;width:5.5px;height:17px;background:#414141;border-radius:2.500px"></div>
<div class="a" style="left:822px;top:56px;width:202px;height:475px;background:#2d2b2b"></div>
<div class="a" style="left:822px;top:56px;width:202px;height:1.3px;background:#6486a2"></div>
<div class="a" style="left:822px;top:57.3px;width:202px;height:0.8px;background:#1e3a52"></div>
<div class="hdr" style="left:822px;top:58px;width:202px;height:15px;background:linear-gradient(#403d3c,#383534)"></div>
<div class="t" style="left:893.75px;top:60.12px;font-size:9px;color:#e0e0e0;letter-spacing:-0.447px;">Navigator</div>
<svg style="left:1000.5px;top:60.7px" width="22" height="8" viewBox="0 0 22 8"><path d="M3.800 1.300H.8v5.700h5.700V4" fill="none" stroke="#b8b8b8" stroke-width="1"/><path d="M3.600 4.200 6.800 1M4.600 .6h2.500V3" fill="none" stroke="#b8b8b8" stroke-width="1"/><path d="M13.500 1 19.300 7M19.300 1 13.500 7" stroke="#e4e4e4" stroke-width="1.900"/></svg>
<div class="a" style="left:822px;top:73px;width:202px;height:21.5px;background:#282727"></div>
<div class="btn" style="left:825px;top:75px;width:17.4px;height:17px;"><svg width="17.4" height="17" viewBox="0 0 17.4 17" style="left:0;top:0"><circle cx="7.200" cy="7.500" r="4" fill="none" stroke="#f0f0f0" stroke-width="1.300"/><path d="M10.300 10.400 13.200 12.600" stroke="#f0f0f0" stroke-width="1.800" stroke-linecap="round"/><path d="M7.400 5.500v4M6.300 6.400 7.400 5.500" stroke="#f0f0f0" stroke-width="1" fill="none"/></svg></div>
<div class="a" style="left:846.5px;top:79px;width:1px;height:8px;background:#666"></div>
<div class="btn" style="left:851px;top:75px;width:17px;height:17px;"><svg width="17" height="17" viewBox="0 0 17 17" style="left:0;top:0"><circle cx="7.200" cy="7.500" r="4" fill="none" stroke="#f0f0f0" stroke-width="1.300"/><path d="M10.300 10.400 13.200 12.600" stroke="#f0f0f0" stroke-width="1.800" stroke-linecap="round"/><path d="M5.200 7.500h4M7.200 5.500v4" stroke="#f0f0f0" stroke-width="1.100"/></svg></div>
<div class="btn" style="left:871.3px;top:75px;width:17px;height:17px;"><svg width="17" height="17" viewBox="0 0 17 17" style="left:0;top:0"><rect x="3.500" y="3.500" width="10" height="10" fill="none" stroke="#f0f0f0" stroke-width="1"/><path d="M5 5l2.500 2.500M12 5 9.500 7.500M5 12l2.500-2.500M12 12 9.500 9.500" stroke="#f0f0f0" stroke-width="1.300"/><path d="M4.800 4.800h2.200l-2.200 2.200zM12.200 4.800v2.200L10 4.800zM4.800 12.200V10l2.200 2.200zM12.200 12.200H10l2.200-2.200z" fill="#f0f0f0"/></svg></div>
<div class="btn" style="left:891px;top:75px;width:17.4px;height:17px;"><svg width="17.4" height="17" viewBox="0 0 17.4 17" style="left:0;top:0"><circle cx="7.200" cy="7.500" r="4" fill="none" stroke="#f0f0f0" stroke-width="1.300"/><path d="M10.300 10.400 13.200 12.600" stroke="#f0f0f0" stroke-width="1.800" stroke-linecap="round"/><path d="M5.200 7.500h4" stroke="#f0f0f0" stroke-width="1.100"/></svg></div>
<div class="a" style="left:912.5px;top:79px;width:1px;height:8px;background:#666"></div>
<div class="btn" style="left:917px;top:75px;width:17px;height:17px;"><svg width="17" height="17" viewBox="0 0 17 17" style="left:0;top:0"><g transform=""><path d="M4.800 5.300A5 5 0 1 0 8.500 3.500" fill="none" stroke="#f0f0f0" stroke-width="1.400"/><path d="M4 3v3.200h3.200z" fill="#f0f0f0"/><rect x="6" y="6.300" width="5" height="4.200" transform="rotate(-20 8.500 8.500)" fill="#f0f0f0"/></g></svg></div>
<div class="btn" style="left:937.3px;top:75px;width:17px;height:17px;background:#1d1d1d;box-shadow:inset 0 0 0 1px #4a4a4a;"><svg width="17" height="17" viewBox="0 0 17 17" style="left:0;top:0"><rect x="5" y="5.300" width="7" height="6.400" fill="#f0f0f0"/><path d="M3.300 3.300 5.500 5.500M13.700 3.300 11.500 5.500M3.300 13.700 5.500 11.500M13.700 13.700 11.500 11.500" stroke="#f0f0f0" stroke-width="1.200"/><path d="M3 3h2.200L3 5.200zM14 3v2.200L11.800 3zM3 14v-2.200L5.200 14zM14 14h-2.200l2.200-2.200z" fill="#f0f0f0"/></svg></div>
<div class="btn" style="left:957.6px;top:75px;width:17px;height:17px;"><svg width="17" height="17" viewBox="0 0 17 17" style="left:0;top:0"><g transform="translate(17,0) scale(-1,1)"><path d="M4.800 5.300A5 5 0 1 0 8.500 3.500" fill="none" stroke="#f0f0f0" stroke-width="1.400"/><path d="M4 3v3.200h3.200z" fill="#f0f0f0"/><rect x="6" y="6.300" width="5" height="4.200" transform="rotate(-20 8.500 8.500)" fill="#f0f0f0"/></g></svg></div>
<div class="a" style="left:978.5px;top:79px;width:1px;height:8px;background:#666"></div>
<div class="btn" style="left:982.6px;top:75px;width:17.4px;height:17px;"><svg width="17.4" height="17" viewBox="0 0 17.4 17" style="left:0;top:0"><rect x="2.300" y="7" width="4.200" height="5.200" fill="#f0f0f0"/><rect x="9.800" y="7.300" width="3.600" height="4.600" fill="none" stroke="#f0f0f0" stroke-width=".9"/><path d="M7.900 5.500v8" stroke="#f0f0f0" stroke-width=".9"/><path d="M3.800 6a4.300 3.300 0 0 1 8.200 0" fill="none" stroke="#f0f0f0" stroke-width="1.100"/></svg></div>
<div class="a" style="left:822px;top:94.5px;width:202px;height:52.5px;background:#454241"></div>
<div class="a" style="left:888px;top:94.5px;width:69px;height:52.5px;background:#fff"></div>
<div class="a" style="left:927.3px;top:103.7px;width:12.7px;height:7.6px;border:1.700px solid #e00c0c;background:#f4f0f0"></div>
<div class="a" style="left:822px;top:147px;width:202px;height:3.5px;background:#201e1e"></div>
<div class="a" style="left:822px;top:150.5px;width:202px;height:1.5px;background:#3a5a74"></div>
<div class="hdr" style="left:822px;top:152px;width:202px;height:14px;background:linear-gradient(#383838,#303030)"></div>
<div class="t" style="left:900.75px;top:155.02px;font-size:9px;color:#e0e0e0;letter-spacing:-0.403px;">Layer</div>
<svg style="left:1000.5px;top:155.5px" width="22" height="8" viewBox="0 0 22 8"><path d="M3.800 1.300H.8v5.700h5.700V4" fill="none" stroke="#b8b8b8" stroke-width="1"/><path d="M3.600 4.200 6.800 1M4.600 .6h2.500V3" fill="none" stroke="#b8b8b8" stroke-width="1"/><path d="M13.500 1 19.300 7M19.300 1 13.500 7" stroke="#e4e4e4" stroke-width="1.900"/></svg>
<div class="t" style="left:827.00px;top:172.82px;font-size:9px;color:#e0e0e0;letter-spacing:-0.359px;">Opacity</div>
<div class="a" style="left:877.5px;top:171.3px;width:113.3px;height:11.5px;background:linear-gradient(90deg,#74c2f8,#58acf0 55%,#4496e0);border:1px solid #3a6a98"></div>
<div class="t" style="left:996.00px;top:172.82px;font-size:9px;color:#e0e0e0;letter-spacing:-0.504px;">100 %</div>
<div class="t" style="left:827.00px;top:191.42px;font-size:9px;color:#e0e0e0;letter-spacing:-0.629px;">Blending</div>
<div class="a" style="left:878.75px;top:189px;width:140px;height:14.3px;background:#444;border-radius:2.500px"></div>
<div class="t" style="left:881.00px;top:191.42px;font-size:9px;color:#e0e0e0;letter-spacing:-0.668px;">Normal</div>
<svg style="left:1009px;top:194px" width="8" height="5"><path d="M.5 .5h6L3.500 4z" fill="#999"/></svg>
<div class="a" style="left:829px;top:212px;width:8px;height:8px;border:1px solid #d0d0d0"></div>
<div class="t" style="left:841.50px;top:211.12px;font-size:9px;color:#e4e4e4;letter-spacing:-0.388px;">Protect Alpha</div>
<div class="a" style="left:900px;top:212px;width:8px;height:8px;border:1px solid #555"></div>
<div class="t" style="left:912.00px;top:211.12px;font-size:9px;color:#777;letter-spacing:-0.628px;">Clipping</div>
<div class="a" style="left:963.4px;top:212px;width:8px;height:8px;border:1px solid #d0d0d0"></div>
<div class="t" style="left:975.60px;top:211.12px;font-size:9px;color:#e4e4e4;letter-spacing:-0.878px;">Lock</div>
<div class="a" style="left:824.3px;top:226.6px;width:182.7px;height:115.4px;background:#494645"></div>
<div class="a" style="left:824.3px;top:226.6px;width:182.7px;height:29.4px;background:#5b5b5b"></div>
<div class="a" style="left:824.3px;top:256px;width:14.5px;height:29px;background:#505050;border-top:1px solid #3a3a3a"></div>
<div class="a" style="left:838.8px;top:256px;width:168.2px;height:29px;background:#529cd8;border-top:1px solid #3a3a3a;border-bottom:1px solid #2c4a68"></div>
<div class="a" style="left:849.8px;top:234.75px;width:26.2px;height:12.5px;background:#fff;background-image:linear-gradient(45deg,#e0dcd8 25%,transparent 25%,transparent 75%,#e0dcd8 75%),linear-gradient(45deg,#e0dcd8 25%,transparent 25%,transparent 75%,#e0dcd8 75%);background-size:4.400px 4.400px;background-position:0 0,2.200px 2.200px;overflow:hidden"></div>
<div class="t" style="left:850.300px;top:234.600px;font-size:5px;color:#222;line-height:6px;font-weight:bold;letter-spacing:-.2px">Camluv<br>#Hoidap247</div>
<div class="a" style="left:849.8px;top:262px;width:26.2px;height:18.3px;background:#fff;background-image:linear-gradient(45deg,#e0dcd8 25%,transparent 25%,transparent 75%,#e0dcd8 75%),linear-gradient(45deg,#e0dcd8 25%,transparent 25%,transparent 75%,#e0dcd8 75%);background-size:4.400px 4.400px;background-position:0 0,2.200px 2.200px;"></div>
<svg style="left:827px;top:236px" width="10" height="40"><circle cx="4.500" cy="4.800" r="3.500" fill="#e4e4e4"/><circle cx="4.500" cy="34.800" r="3.500" fill="#e4e4e4"/></svg>
<div class="t" style="left:888.60px;top:235.65px;font-size:10px;color:#f0f0f0;letter-spacing:-0.400px;">Camluv</div>
<div class="t" style="left:888.60px;top:265.85px;font-size:10px;color:#fff;font-weight:bold;letter-spacing:0.041px;">Layer1</div>
<svg style="left:991.500px;top:265.200px" width="12" height="12" viewBox="-6 -6 12 12"><g fill="#fff"><circle r="3.800"/><rect x="-1.300" y="-5.800" width="2.600" height="3.200" transform="rotate(0)"/><rect x="-1.300" y="-5.800" width="2.600" height="3.200" transform="rotate(45)"/><rect x="-1.300" y="-5.800" width="2.600" height="3.200" transform="rotate(90)"/><rect x="-1.300" y="-5.800" width="2.600" height="3.200" transform="rotate(135)"/><rect x="-1.300" y="-5.800" width="2.600" height="3.200" transform="rotate(180)"/><rect x="-1.300" y="-5.800" width="2.600" height="3.200" transform="rotate(225)"/><rect x="-1.300" y="-5.800" width="2.600" height="3.200" transform="rotate(270)"/><rect x="-1.300" y="-5.800" width="2.600" height="3.200" transform="rotate(315)"/></g><circle r=".9" fill="#5a7a98"/></svg>
<div class="a" style="left:1007.5px;top:226.6px;width:14.5px;height:115.4px;background:#2e2e2e"></div>
<svg style="left:1007.500px;top:226.600px" width="14.500" height="115.400"><path d="M3.800 6 7.250 .8 10.700 6z" fill="#b4b4b4"/><path d="M3.800 109 7.250 114.200 10.700 109z" fill="#b4b4b4"/></svg>
<div class="a" style="left:1008px;top:235px;width:13.5px;height:98px;background:linear-gradient(90deg,#5a5a5a,#6e6e6e);border-radius:3.500px"></div>
<div class="btn" style="left:827.5px;top:345.300px;width:16.3px;height:16.300px;"><svg width="16.3" height="15.600" viewBox="0 0 16.3 15.600" style="left:0;top:0"><path d="M4.500 3h5l2.500 2.500v7.500h-7.500z" fill="none" stroke="#f0f0f0" stroke-width="1.100"/></svg></div>
<div class="btn" style="left:847.5px;top:345.300px;width:16.5px;height:16.300px;"><svg width="16.5" height="15.600" viewBox="0 0 16.5 15.600" style="left:0;top:0"><path d="M4.500 3h5l2.500 2.500v7.500h-7.500z" fill="none" stroke="#f0f0f0" stroke-width="1.100"/><rect x="6.800" y="6.500" width="2.700" height="4.500" fill="none" stroke="#f0f0f0" stroke-width=".8"/><path d="M6.800 8.700h2.700" stroke="#f0f0f0" stroke-width=".7"/></svg></div>
<div class="btn" style="left:867px;top:345.300px;width:16.75px;height:16.300px;"><svg width="16.75" height="15.600" viewBox="0 0 16.75 15.600" style="left:0;top:0"><path d="M4.500 3h5l2.500 2.500v7.500h-7.500z" fill="none" stroke="#f0f0f0" stroke-width="1.100"/><path d="M7.300 7.800 8.400 6.800V11.200" fill="none" stroke="#f0f0f0" stroke-width=".9"/></svg></div>
<div class="btn" style="left:888px;top:345.300px;width:21.4px;height:16.300px;"><svg width="21.4" height="15.600" viewBox="0 0 21.4 15.600" style="left:0;top:0"><path d="M3.500 2.500h4.500l2.300 2.300v6.700H3.500z" fill="none" stroke="#f0f0f0" stroke-width="1.100"/><path d="M7.500 10.500h5M10 8v5" stroke="#3f3f3f" stroke-width="2.600"/><path d="M7.800 10.500h4.400M10 8.300v4.400" stroke="#f0f0f0" stroke-width="1.100"/><path d="M14 6.500h5L16.500 9.500z" fill="#f0f0f0"/></svg></div>
<div class="btn" style="left:913px;top:345.300px;width:16.7px;height:16.300px;"><svg width="16.7" height="15.600" viewBox="0 0 16.7 15.600" style="left:0;top:0"><path d="M3.300 4h4l1.200 1.500h5v7H3.300z" fill="#f0f0f0"/></svg></div>
<div class="a" style="left:934.4px;top:350px;width:1px;height:8px;background:#666"></div>
<div class="btn" style="left:938.4px;top:345.300px;width:17px;height:16.300px;"><svg width="17" height="15.600" viewBox="0 0 17 15.600" style="left:0;top:0"><rect x="6" y="3.300" width="7" height="7" fill="none" stroke="#f0f0f0" stroke-width="1"/><rect x="4" y="5.500" width="7" height="7" fill="#3f3f3f" stroke="#f0f0f0" stroke-width="1"/></svg></div>
<div class="btn" style="left:959.4px;top:345.300px;width:16.2px;height:16.300px;background:#1d1d1d;box-shadow:inset 0 0 0 1px #4a4a4a;"><svg width="16.2" height="15.600" viewBox="0 0 16.2 15.600" style="left:0;top:0"><rect x="3.300" y="3" width="3" height="3" fill="#f0f0f0"/><rect x="3.300" y="9.500" width="3" height="3" fill="#f0f0f0"/><rect x="9" y="5.800" width="4.500" height="4" fill="#f0f0f0"/><path d="M6.300 4.500h2v6.500h-2M8.300 7.800h1" stroke="#f0f0f0" stroke-width=".9" fill="none"/></svg></div>
<div class="a" style="left:980.3px;top:350px;width:1px;height:8px;background:#666"></div>
<div class="btn" style="left:984.4px;top:345.300px;width:16.2px;height:16.300px;"><svg width="16.2" height="15.600" viewBox="0 0 16.2 15.600" style="left:0;top:0"><path d="M4.500 5.500h7.500v7.500h-7.500z" fill="none" stroke="#f0f0f0" stroke-width="1.100"/><path d="M3.500 5h9.500M6.500 5V3.500h3.500V5M6.600 7v4.500M8.250 7v4.500M9.900 7v4.500" stroke="#f0f0f0" stroke-width="1" fill="none"/></svg></div>
<div class="a" style="left:822px;top:366px;width:202px;height:4px;background:#242222"></div>
<div class="a" style="left:822px;top:370px;width:202px;height:1.5px;background:#2c4658"></div>
<div class="hdr" style="left:822px;top:371.500px;width:202px;height:14.500px;background:linear-gradient(#383838,#303030)"></div>
<div class="t" style="left:891.75px;top:374.82px;font-size:9px;color:#e0e0e0;letter-spacing:-0.502px;">Brush Size</div>
<svg style="left:1000.5px;top:375.5px" width="22" height="8" viewBox="0 0 22 8"><path d="M3.800 1.300H.8v5.700h5.700V4" fill="none" stroke="#b8b8b8" stroke-width="1"/><path d="M3.600 4.200 6.800 1M4.600 .6h2.500V3" fill="none" stroke="#b8b8b8" stroke-width="1"/><path d="M13.500 1 19.300 7M19.300 1 13.500 7" stroke="#e4e4e4" stroke-width="1.900"/></svg>
<div class="a" style="left:823px;top:386.500px;width:179px;height:144.500px;overflow:hidden;background:#555">
<div class="a" style="left:0px;top:0.0px;width:29.5px;height:37.500px;background:#585858;border-right:1px solid #4a4a4a;border-bottom:1px solid #4a4a4a"></div>
<div class="a" style="left:14.40px;top:14.35px;width:0.7px;height:0.7px;border-radius:50%;background:#f2f2f2;opacity:0.35"></div>
<div class="t" style="left:0px;width:29.5px;text-align:center;top:29.0px;font-size:7.500px;color:#ececec">1</div>
<div class="a" style="left:29.5px;top:0.0px;width:30.0px;height:37.500px;background:#585858;border-right:1px solid #4a4a4a;border-bottom:1px solid #4a4a4a"></div>
<div class="a" style="left:44.00px;top:14.20px;width:1px;height:1px;border-radius:50%;background:#f2f2f2;opacity:0.35"></div>
<div class="t" style="left:29.5px;width:30.0px;text-align:center;top:29.0px;font-size:7.500px;color:#ececec">1.5</div>
<div class="a" style="left:59.5px;top:0.0px;width:30.0px;height:37.500px;background:#585858;border-right:1px solid #4a4a4a;border-bottom:1px solid #4a4a4a"></div>
<div class="a" style="left:73.85px;top:14.05px;width:1.3px;height:1.3px;border-radius:50%;background:#f2f2f2;opacity:0.7"></div>
<div class="t" style="left:59.5px;width:30.0px;text-align:center;top:29.0px;font-size:7.500px;color:#ececec">2</div>
<div class="a" style="left:89.5px;top:0.0px;width:29.5px;height:37.500px;background:#585858;border-right:1px solid #4a4a4a;border-bottom:1px solid #4a4a4a"></div>
<div class="a" style="left:103.35px;top:13.80px;width:1.8px;height:1.8px;border-radius:50%;background:#f2f2f2;opacity:1"></div>
<div class="t" style="left:89.5px;width:29.5px;text-align:center;top:29.0px;font-size:7.500px;color:#ececec">3</div>
<div class="a" style="left:119px;top:0.0px;width:30.5px;height:37.500px;background:#585858;border-right:1px solid #4a4a4a;border-bottom:1px solid #4a4a4a"></div>
<div class="a" style="left:132.85px;top:13.30px;width:2.8px;height:2.8px;border-radius:50%;background:#f2f2f2;opacity:1"></div>
<div class="t" style="left:119px;width:30.5px;text-align:center;top:29.0px;font-size:7.500px;color:#ececec">4</div>
<div class="a" style="left:149.5px;top:0.0px;width:29.5px;height:37.500px;background:#585858;border-right:1px solid #4a4a4a;border-bottom:1px solid #4a4a4a"></div>
<div class="a" style="left:162.35px;top:12.80px;width:3.8px;height:3.8px;border-radius:50%;background:#f2f2f2;opacity:1"></div>
<div class="t" style="left:149.5px;width:29.5px;text-align:center;top:29.0px;font-size:7.500px;color:#ececec">5</div>
<div class="a" style="left:0px;top:37.5px;width:29.5px;height:37.500px;background:#585858;border-right:1px solid #4a4a4a;border-bottom:1px solid #4a4a4a"></div>
<div class="a" style="left:12.25px;top:50.20px;width:5px;height:5px;border-radius:50%;background:#f2f2f2;opacity:1"></div>
<div class="t" style="left:0px;width:29.5px;text-align:center;top:66.5px;font-size:7.500px;color:#ececec">7</div>
<div class="a" style="left:29.5px;top:37.5px;width:30.0px;height:37.500px;background:#585858;border-right:1px solid #4a4a4a;border-bottom:1px solid #4a4a4a"></div>
<div class="a" style="left:40.90px;top:49.10px;width:7.2px;height:7.2px;border-radius:50%;background:#f2f2f2;opacity:1"></div>
<div class="t" style="left:29.5px;width:30.0px;text-align:center;top:66.5px;font-size:7.500px;color:#ececec">10</div>
<div class="a" style="left:59.5px;top:37.5px;width:30.0px;height:37.500px;background:#585858;border-right:1px solid #4a4a4a;border-bottom:1px solid #4a4a4a"></div>
<div class="a" style="left:69.90px;top:48.10px;width:9.2px;height:9.2px;border-radius:50%;background:#f2f2f2;opacity:1"></div>
<div class="t" style="left:59.5px;width:30.0px;text-align:center;top:66.5px;font-size:7.500px;color:#ececec">12</div>
<div class="a" style="left:89.5px;top:37.5px;width:29.5px;height:37.500px;background:#585858;border-right:1px solid #4a4a4a;border-bottom:1px solid #4a4a4a"></div>
<div class="a" style="left:98.65px;top:47.10px;width:11.2px;height:11.2px;border-radius:50%;background:#f2f2f2;opacity:1"></div>
<div class="t" style="left:89.5px;width:29.5px;text-align:center;top:66.5px;font-size:7.500px;color:#ececec">15</div>
<div class="a" style="left:119px;top:37.5px;width:30.5px;height:37.500px;background:#585858;border-right:1px solid #4a4a4a;border-bottom:1px solid #4a4a4a"></div>
<div class="a" style="left:126.75px;top:45.20px;width:15px;height:15px;border-radius:50%;background:#f2f2f2;opacity:1"></div>
<div class="t" style="left:119px;width:30.5px;text-align:center;top:66.5px;font-size:7.500px;color:#ececec">20</div>
<div class="a" style="left:149.5px;top:37.5px;width:29.5px;height:37.500px;background:#585858;border-right:1px solid #4a4a4a;border-bottom:1px solid #4a4a4a"></div>
<div class="a" style="left:155.00px;top:43.45px;width:18.5px;height:18.5px;border-radius:50%;background:#f2f2f2;opacity:1"></div>
<div class="t" style="left:149.5px;width:29.5px;text-align:center;top:66.5px;font-size:7.500px;color:#ececec">25</div>
<div class="a" style="left:0px;top:75.0px;width:29.5px;height:37.500px;background:#585858;border-right:1px solid #4a4a4a;border-bottom:1px solid #4a4a4a"></div>
<div class="a" style="left:5.50px;top:80.95px;width:18.5px;height:18.5px;border-radius:50%;background:#f2f2f2;opacity:1"></div>
<div class="t" style="left:0px;width:29.5px;text-align:center;top:104.0px;font-size:7.500px;color:#ececec">30</div>
<div class="a" style="left:29.5px;top:75.0px;width:30.0px;height:37.500px;background:#585858;border-right:1px solid #4a4a4a;border-bottom:1px solid #4a4a4a"></div>
<div class="a" style="left:35.25px;top:80.95px;width:18.5px;height:18.5px;border-radius:50%;background:#f2f2f2;opacity:1"></div>
<div class="t" style="left:29.5px;width:30.0px;text-align:center;top:104.0px;font-size:7.500px;color:#ececec">40</div>
<div class="a" style="left:59.5px;top:75.0px;width:30.0px;height:37.500px;background:#585858;border-right:1px solid #4a4a4a;border-bottom:1px solid #4a4a4a"></div>
<div class="a" style="left:65.25px;top:80.95px;width:18.5px;height:18.5px;border-radius:50%;background:#f2f2f2;opacity:1"></div>
<div class="t" style="left:59.5px;width:30.0px;text-align:center;top:104.0px;font-size:7.500px;color:#ececec">50</div>
<div class="a" style="left:89.5px;top:75.0px;width:29.5px;height:37.500px;background:#585858;border-right:1px solid #4a4a4a;border-bottom:1px solid #4a4a4a"></div>
<div class="a" style="left:95.00px;top:80.95px;width:18.5px;height:18.5px;border-radius:50%;background:#f2f2f2;opacity:1"></div>
<div class="t" style="left:89.5px;width:29.5px;text-align:center;top:104.0px;font-size:7.500px;color:#ececec">70</div>
<div class="a" style="left:119px;top:75.0px;width:30.5px;height:37.500px;background:#585858;border-right:1px solid #4a4a4a;border-bottom:1px solid #4a4a4a"></div>
<div class="a" style="left:125.00px;top:80.95px;width:18.5px;height:18.5px;border-radius:50%;background:#f2f2f2;opacity:1"></div>
<div class="t" style="left:119px;width:30.5px;text-align:center;top:104.0px;font-size:7.500px;color:#ececec">100</div>
<div class="a" style="left:149.5px;top:75.0px;width:29.5px;height:37.500px;background:#585858;border-right:1px solid #4a4a4a;border-bottom:1px solid #4a4a4a"></div>
<div class="a" style="left:155.00px;top:80.95px;width:18.5px;height:18.5px;border-radius:50%;background:#f2f2f2;opacity:1"></div>
<div class="t" style="left:149.5px;width:29.5px;text-align:center;top:104.0px;font-size:7.500px;color:#ececec">150</div>
<div class="a" style="left:0px;top:112.5px;width:29.5px;height:37.500px;background:#585858;border-right:1px solid #4a4a4a;border-bottom:1px solid #4a4a4a"></div>
<div class="a" style="left:5.50px;top:118.45px;width:18.5px;height:18.5px;border-radius:50%;background:#f2f2f2;opacity:1"></div>
<div class="t" style="left:0px;width:29.5px;text-align:center;top:141.5px;font-size:7.500px;color:#ececec">200</div>
<div class="a" style="left:29.5px;top:112.5px;width:30.0px;height:37.500px;background:#585858;border-right:1px solid #4a4a4a;border-bottom:1px solid #4a4a4a"></div>
<div class="a" style="left:35.25px;top:118.45px;width:18.5px;height:18.5px;border-radius:50%;background:#f2f2f2;opacity:1"></div>
<div class="t" style="left:29.5px;width:30.0px;text-align:center;top:141.5px;font-size:7.500px;color:#ececec">300</div>
<div class="a" style="left:59.5px;top:112.5px;width:30.0px;height:37.500px;background:#585858;border-right:1px solid #4a4a4a;border-bottom:1px solid #4a4a4a"></div>
<div class="a" style="left:65.25px;top:118.45px;width:18.5px;height:18.5px;border-radius:50%;background:#f2f2f2;opacity:1"></div>
<div class="t" style="left:59.5px;width:30.0px;text-align:center;top:141.5px;font-size:7.500px;color:#ececec">400</div>
<div class="a" style="left:89.5px;top:112.5px;width:29.5px;height:37.500px;background:#585858;border-right:1px solid #4a4a4a;border-bottom:1px solid #4a4a4a"></div>
<div class="a" style="left:95.00px;top:118.45px;width:18.5px;height:18.5px;border-radius:50%;background:#f2f2f2;opacity:1"></div>
<div class="t" style="left:89.5px;width:29.5px;text-align:center;top:141.5px;font-size:7.500px;color:#ececec">500</div>
<div class="a" style="left:119px;top:112.5px;width:30.5px;height:37.500px;background:#585858;border-right:1px solid #4a4a4a;border-bottom:1px solid #4a4a4a"></div>
<div class="a" style="left:125.00px;top:118.45px;width:18.5px;height:18.5px;border-radius:50%;background:#f2f2f2;opacity:1"></div>
<div class="t" style="left:119px;width:30.5px;text-align:center;top:141.5px;font-size:7.500px;color:#ececec">700</div>
<div class="a" style="left:149.5px;top:112.5px;width:29.5px;height:37.500px;background:#585858;border-right:1px solid #4a4a4a;border-bottom:1px solid #4a4a4a"></div>
<div class="a" style="left:155.00px;top:118.45px;width:18.5px;height:18.5px;border-radius:50%;background:#f2f2f2;opacity:1"></div>
<div class="t" style="left:149.5px;width:29.5px;text-align:center;top:141.5px;font-size:7.500px;color:#ececec">1000</div>
</div>
<div class="a" style="left:1008.5px;top:386.5px;width:14px;height:144.5px;background:#2e2e2e"></div>
<svg style="left:1008.500px;top:386.500px" width="14" height="144.500"><path d="M4 6.500 7 1.500 10 6.500z" fill="#aaa"/><path d="M4 138 7 143 10 138z" fill="#aaa"/></svg>
<div class="a" style="left:1009.5px;top:396px;width:12px;height:122px;background:linear-gradient(90deg,#5a5a5a,#6e6e6e);border-radius:3.500px"></div>
<div class="a" style="left:0px;top:531px;width:1024px;height:16px;background:#252525"></div>
<div class="t" style="left:4.50px;top:534.12px;font-size:9px;color:#dcdcdc;letter-spacing:-0.357px;white-space:pre;">1600 * 1200 pixel</div>
<div class="t" style="left:75.50px;top:534.12px;font-size:9px;color:#dcdcdc;letter-spacing:-0.133px;white-space:pre;">(11.6 * 8.7cm)</div>
<div class="t" style="left:137.00px;top:534.12px;font-size:9px;color:#dcdcdc;letter-spacing:-0.290px;white-space:pre;">350 dpi</div>
<div class="t" style="left:172.00px;top:534.12px;font-size:9px;color:#dcdcdc;letter-spacing:-0.604px;white-space:pre;">300 %</div>
<div class="t" style="left:202.00px;top:534.12px;font-size:9px;color:#dcdcdc;letter-spacing:-0.426px;white-space:pre;">( 1207, 320 )</div>
<div class="t" style="left:255.50px;top:534.12px;font-size:9px;color:#dcdcdc;letter-spacing:0.061px;white-space:pre;">Move Horizontally/Perpendicularly by holding down Shift</div>
<div class="a" style="left:0px;top:547px;width:1024px;height:29px;background:radial-gradient(ellipse 40px 14px at 440px 12px,rgba(70,52,28,.5),transparent),radial-gradient(ellipse 50px 16px at 600px 18px,rgba(72,66,34,.55),transparent),radial-gradient(ellipse 45px 16px at 690px 10px,rgba(56,70,40,.5),transparent),radial-gradient(ellipse 30px 12px at 520px 20px,rgba(60,40,24,.4),transparent),linear-gradient(90deg,#0b0a09 0,#14110c 6%,#28210f 11.500%,#17130d 15%,#100e0b 30%,#1c1810 40%,#221d13 50%,#282416 58%,#282a1c 66%,#1f281a 72%,#172015 78%,#10140e 84%,#141a12 90%,#0e120d 96%,#0b0c0a 100%)"></div>
<div class="a" style="left:0px;top:547px;width:1024px;height:1px;background:#5e5e5c"></div>
<div class="a" style="left:0px;top:548px;width:1024px;height:1px;background:#2a2826"></div>
<svg style="left:5px;top:547px" width="30" height="29" viewBox="0 0 30 29"><defs><radialGradient id="orb" cx=".5" cy=".62" r=".62"><stop offset="0" stop-color="#58b8ec"/><stop offset=".5" stop-color="#2672b4"/><stop offset=".85" stop-color="#123c6c"/><stop offset="1" stop-color="#0a2444"/></radialGradient><linearGradient id="orbh" x1="0" y1="0" x2="0" y2="1"><stop offset="0" stop-color="#fff" stop-opacity=".55"/><stop offset="1" stop-color="#fff" stop-opacity=".05"/></linearGradient></defs><circle cx="15" cy="14.500" r="13.900" fill="url(#orb)" stroke="#8cc4e8" stroke-opacity=".55" stroke-width=".9"/><path d="M2.500 11a12.800 12.800 0 0 1 25 0c-4-2-8.500-2.500-12.500-2.500S6.500 9 2.500 11z" fill="url(#orbh)"/><g transform="translate(15 14.800) scale(1.280) translate(-14 -14.600)"><path d="M8.500 9.500c2-1 3.500-.8 5.500.2l-1 4.300c-2-1-3.500-1.100-5.500-.2z" fill="#f2743a"/><path d="M15 10c2 1 3.500 1 5.500 0l-1 4.300c-2 1-3.500 1-5.500 0z" fill="#9ccc48"/><path d="M7.300 15c2-1 3.500-.8 5.500.2l-1 4.300c-2-1-3.500-1.100-5.500-.2z" fill="#48a8f0"/><path d="M13.800 15.500c2 1 3.500 1 5.500 0l-1 4.300c-2 1-3.500 1-5.500 0z" fill="#fcc838"/></g></svg>
<svg style="left:68px;top:552px" width="22" height="18"><path d="M0 0 12 9 0 18z" fill="#6e42d8"/><path d="M21.700 0 9.500 9 21.700 18z" fill="#dccdff"/><path d="M9.500 9 12 7.200V10.800z" fill="#6e42d8"/></svg>
<svg style="left:111px;top:547.500px" width="30" height="28" viewBox="0 0 30 28"><ellipse cx="14" cy="14" rx="14.200" ry="4.600" transform="rotate(-40 14 14)" fill="none" stroke="#d8a018" stroke-width="2"/><circle cx="15.500" cy="14.700" r="9.200" fill="#2b8ee4"/><circle cx="15.500" cy="14.700" r="4.300" fill="#12100c"/><rect x="10" y="13.300" width="14.600" height="3" fill="#2b8ee4"/><path d="M16 16.300h9.500v4.700h-7z" fill="#14110c"/><path d="M18 20.500a6.500 6.500 0 0 0 5.500-3" stroke="#2b8ee4" stroke-width="3" fill="none"/><path d="M8 11a9.200 9.200 0 0 1 6-5.300" stroke="#7cc8f8" stroke-width="1.300" fill="none"/><path d="M19 5.500C23 2.500 26.500 1.800 27.300 3c.8 1.200-.5 3.800-3 6.800" fill="none" stroke="#f0b828" stroke-width="2"/></svg>
<div class="a" style="left:150px;top:548px;width:43px;height:27.5px;background:linear-gradient(135deg,#787470 0,#4a4642 45%,#2a2624 100%);border:1px solid #8c8a88;border-radius:2px;box-shadow:inset 0 0 0 1px rgba(255,255,255,.12)"></div>
<div class="a" style="left:196.3px;top:548px;width:43.5px;height:27.5px;background:linear-gradient(135deg,#787470 0,#4a4642 45%,#2a2624 100%);border:1px solid #8c8a88;border-radius:2px;box-shadow:inset 0 0 0 1px rgba(255,255,255,.12)"></div>
<div class="a" style="left:243px;top:548px;width:43px;height:27.5px;background:linear-gradient(135deg,#a09c98 0,#7c7874 45%,#56524e 100%);border:1px solid #c8c8c8;border-radius:2px;box-shadow:inset 0 0 0 1px rgba(255,255,255,.12)"></div>
<div class="a" style="left:289px;top:548px;width:44px;height:27.5px;background:linear-gradient(135deg,#787470 0,#4a4642 45%,#2a2624 100%);border:1px solid #8c8a88;border-radius:2px;box-shadow:inset 0 0 0 1px rgba(255,255,255,.12)"></div>
<svg style="left:159px;top:548.500px" width="25" height="25" viewBox="0 0 25 25"><circle cx="12.400" cy="12.200" r="11.400" fill="#5aa84a" stroke="#eaf4e6" stroke-width="1"/><circle cx="12.400" cy="12.200" r="5.300" fill="none" stroke="#eaf4e6" stroke-width="2.200"/><path d="M12.400 12.200 14 0 25 3.500 24.500 9z" fill="#625e5a"/><path d="M14.300 6.500 15.500 1.500M17 8.200 21.500 3M18.300 10.800 23.500 8.500" stroke="#f07a20" stroke-width="1.700" stroke-linecap="round"/></svg>
<svg style="left:207px;top:550px" width="23" height="23" viewBox="-11.500 -11.500 23 23"><circle r="11.100" fill="#e8402c"/><path d="M0 0 -9.610 -5.550A11.100 11.100 0 0 0 0 11.100z" fill="#2ea050" transform="rotate(0)"/><path d="M-9.610 -5.550A11.100 11.100 0 0 0 -1.500 11 L4.500 2.600 -4.500 2.600z" fill="#2ea050"/><path d="M11.050 -1A11.100 11.100 0 0 1 -1.500 11L4.500 2.600 4.500 -2.600z" fill="#fcc42c"/><path d="M4.500 -2.600H10.800A11.100 11.100 0 0 1 -1.500 11L4.500 2.600z" fill="#fcc42c"/><circle r="5.200" fill="#fff"/><circle r="4.100" fill="#3f7fe8"/></svg>
<svg style="left:253px;top:549.500px" width="23.500" height="23" viewBox="0 0 23.500 23"><rect x="0" y="0" width="23.500" height="23" rx="4" fill="#f4f4f2"/><path d="M12 4c4 1 6.500 4 6.300 7.800-.2 3.800-3 6.500-6.500 6.500S5.300 15.500 5.500 12C5.700 8 8.500 5 12 4z" fill="#18a8a0"/><path d="M12 4c-3 1.200-5.800 3.600-6.400 7 2.500.3 5-1 6.200-3 .7-1.200.6-2.800.2-4z" fill="#f04a3a"/><path d="M12 4c3 .8 5.500 3 6.200 6-2 .5-4.500-.3-5.700-2-.6-1.200-.7-2.800-.5-4z" fill="#f8b830"/><path d="M7 15.500c2 2.500 6.500 3.500 9.500.8-2.500.2-6-.2-9.500-.8z" fill="#2a78d8"/></svg>
<svg style="left:298px;top:549px" width="26" height="25" viewBox="0 0 26 25"><path d="M2.500 13C2.500 7.500 7.500 4 13.500 4c5 0 8.500 2.800 8.500 6.500 0 3-2.200 4.300-4.300 4.300-1.700 0-2.400 1-2 2.400.5 1.700-.7 3.300-3.700 3.300C6.500 20.500 2.500 17.500 2.500 13z" fill="#cfe4f4" stroke="#8aa8c4" stroke-width=".7"/><circle cx="7.500" cy="10.500" r="1.800" fill="#e84a3a"/><circle cx="11.500" cy="7.500" r="1.800" fill="#f0c030"/><circle cx="16" cy="7.300" r="1.800" fill="#58b848"/><circle cx="7" cy="15" r="1.700" fill="#3a78d8"/><path d="M23 1.500 14.500 20.500" stroke="#d88a30" stroke-width="2" stroke-linecap="round"/><path d="M23.200 1 21.500 5" stroke="#c8a070" stroke-width="2.600" stroke-linecap="round"/></svg>
<div class="t" style="left:923.00px;top:553.83px;font-size:9px;color:#e8e8e8;letter-spacing:-0.502px;">EN</div>
<svg style="left:946px;top:559.500px" width="8" height="6"><path d="M1.200 4.300 3.700 .8 6.200 4.300z" fill="#f0f0f0"/></svg>
<div class="t" style="left:967.70px;top:547.84px;font-size:9.5px;color:#f4f4f4;letter-spacing:-0.625px;">7:43 PM</div>
<div class="t" style="left:964.00px;top:561.84px;font-size:9.5px;color:#f4f4f4;letter-spacing:-0.473px;">8/12/2021</div>
<div class="a" style="left:1013.5px;top:548px;width:10.5px;height:28px;background:linear-gradient(#4a4a4a,#222 25%,#161616 70%,#222);border-left:1px solid #5a5a5a;box-shadow:inset 1px 0 0 #333"></div>
</body></html>
